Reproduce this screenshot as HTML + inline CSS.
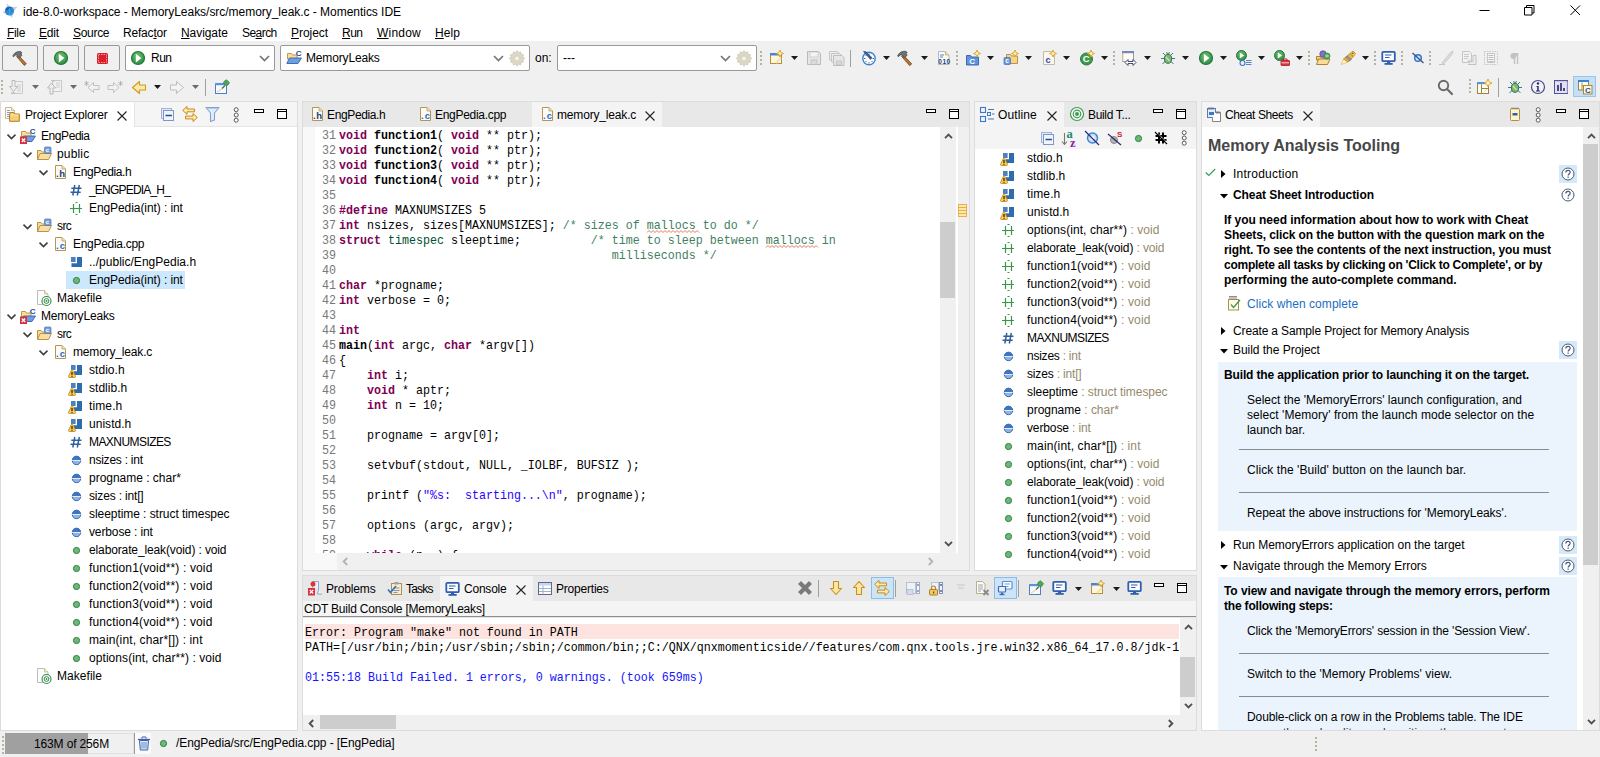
<!DOCTYPE html>
<html><head><meta charset="utf-8"><title>Momentics IDE</title>
<style>
*{box-sizing:border-box;margin:0;padding:0}
html,body{width:1600px;height:757px;overflow:hidden;background:#f0f0f0;font-family:"Liberation Sans",sans-serif;font-size:12px;color:#000}
.a{position:absolute}
.i{position:absolute;overflow:visible}
.t{position:absolute;white-space:pre;line-height:18px;height:18px}
.b{font-weight:bold}
.panel{position:absolute;background:#fff;border:1px solid #dcdcdc;overflow:hidden}
.tabbar{position:absolute;left:0;top:0;right:0;height:25px;background:#e8e8e8}
.tab{position:absolute;top:0;height:25px;background:#f4f4f4}
.mono{font-family:"Liberation Mono",monospace;font-size:11.67px;white-space:pre}
.ln{position:absolute;left:0;width:336px;text-align:right;color:#787878;height:15px;line-height:15px;transform:scaleY(1.07);transform-origin:0 11px}
.cl{position:absolute;left:339px;height:15px;line-height:15px;transform:scaleY(1.07);transform-origin:0 11px}
.k{color:#7f0055;font-weight:bold}
.c{color:#3f7f5f}
.s{color:#2a00ff}
.f{font-weight:bold}
.sq{}
.ty{color:#948a6c}
.sel{position:absolute;background:#cce8ff}
.sep{position:absolute;height:1px;background:#8a8a8a}
.btn{position:absolute;border:1px solid #999;background:#f0f0f0;border-radius:2px}
.combo{position:absolute;border:1px solid #999;background:#fff;border-radius:2px}
u{text-decoration:underline;text-underline-offset:1px}
</style></head><body>
<svg width="0" height="0" style="position:absolute"><defs><radialGradient id="gb" cx="45%" cy="35%" r="70%"><stop offset="0" stop-color="#6fbd6c"/><stop offset="1" stop-color="#2a8a42"/></radialGradient></defs></svg>
<div class="a" style="left:0;top:0;width:1600px;height:41px;background:#fff"></div>
<svg class="i" style="left:2px;top:3px" width="16" height="16" viewBox="0 0 16 16" ><path d="M5 .500l3.500 3.500 7-.200-4 4.700-1.500 6.500-3.500-4.500-6.200-.500 4.200-4z" fill="#c0c8de" opacity=".85"/><circle cx="7.500" cy="8" r="4.600" fill="#2b8ad6"/><path d="M3.500 6c1.500-2 4-2.500 6-1.500-1 1.500-3 1-4 2.500s-1.500 1-2-1z" fill="#1b5fae"/><path d="M8.500 12.500c1.500-.5 3-2 3.300-4-1.500.5-2 2-3.300 4z" fill="#4aa8ea"/><path d="M7.300 4.500v8" stroke="#8fd0f4" stroke-width=".6" opacity=".7"/></svg>
<div class="t " style="left:23px;top:3px;;letter-spacing:-0.032px">ide-8.0-workspace - MemoryLeaks/src/memory_leak.c - Momentics IDE</div>
<svg class="i" style="left:1479px;top:5px" width="12" height="12" viewBox="0 0 12 12"><path d="M0.5 5.5h10" stroke="#000" fill="none"/></svg>
<svg class="i" style="left:1524px;top:5px" width="12" height="12" viewBox="0 0 12 12"><path d="M0.5 2.5h7.500v7.500h-7.500zM2.500 2.500v-2h7.500v7.500h-2" stroke="#000" fill="none"/></svg>
<svg class="i" style="left:1570px;top:5px" width="12" height="12" viewBox="0 0 12 12"><path d="M0.500 0.500l9.500 9.500M10 0.500l-9.500 9.500" stroke="#000" fill="none"/></svg>
<div class="t " style="left:7px;top:24px;;letter-spacing:-0.334px"><u>F</u>ile</div>
<div class="t " style="left:39px;top:24px;;letter-spacing:-0.169px"><u>E</u>dit</div>
<div class="t " style="left:73px;top:24px;;letter-spacing:-0.304px"><u>S</u>ource</div>
<div class="t " style="left:123px;top:24px;;letter-spacing:-0.194px">Refac<u>t</u>or</div>
<div class="t " style="left:181px;top:24px;;letter-spacing:-0.070px"><u>N</u>avigate</div>
<div class="t " style="left:242px;top:24px;;letter-spacing:-0.554px">Se<u>a</u>rch</div>
<div class="t " style="left:291px;top:24px;;letter-spacing:-0.050px"><u>P</u>roject</div>
<div class="t " style="left:342px;top:24px;;letter-spacing:-0.505px"><u>R</u>un</div>
<div class="t " style="left:377px;top:24px;;letter-spacing:0.220px"><u>W</u>indow</div>
<div class="t " style="left:435px;top:24px;;letter-spacing:0.080px"><u>H</u>elp</div>
<div class="btn" style="left:2px;top:45px;width:36px;height:26px"></div>
<svg class="i" style="left:12px;top:50px" width="16" height="16" viewBox="0 0 16 16" ><g transform="translate(-.800 -.800) scale(1.080)"><path d="M6.5 5.5l7.5 8-1.8 1.5-7.2-8.200z" fill="#b5763a" stroke="#7a4a1d" stroke-width=".8"/><path d="M1.500 6.500c1-3 4-4.800 7.500-4.200l1 1.200-1.200.5 1.200 1.700-2.500 2.300-1.800-2.300c-1.200-.5-2.700-.2-3.400 1.300z" fill="#6e7278" stroke="#44484d" stroke-width=".7"/></g></svg>
<div class="btn" style="left:43px;top:45px;width:36px;height:26px"></div>
<svg class="i" style="left:53px;top:50px" width="16" height="16" viewBox="0 0 16 16" ><circle cx="8" cy="8" r="6.500" fill="url(#gb)" stroke="#1f7a3a" stroke-width="1.200"/><path d="M5.800 3.800v8.600l5.600-4.300z" fill="#fff"/></svg>
<div class="btn" style="left:84px;top:45px;width:36px;height:26px"></div>
<svg class="i" style="left:94px;top:50px" width="16" height="16" viewBox="0 0 16 16" ><rect x="3" y="3" width="11" height="11" rx="1.500" fill="#d9202c"/><rect x="4.500" y="4.500" width="8" height="8" fill="none" stroke="#f4a8a8" stroke-width=".9" stroke-dasharray="1.500 1"/></svg>
<div class="combo" style="left:125px;top:45px;width:150px;height:26px"></div>
<svg class="i" style="left:130px;top:50px" width="16" height="16" viewBox="0 0 16 16" ><circle cx="8" cy="8" r="6.500" fill="url(#gb)" stroke="#1f7a3a" stroke-width="1.200"/><path d="M5.800 3.800v8.600l5.600-4.300z" fill="#fff"/></svg>
<div class="t " style="left:151px;top:49px;;letter-spacing:-0.505px">Run</div>
<svg class="i" style="left:259px;top:55px" width="11" height="7" viewBox="0 0 11 7"><path d="M1 1l4.500 4.500 4.500-4.500" stroke="#767676" stroke-width="1.700" fill="none"/></svg>
<div class="combo" style="left:280px;top:45px;width:250px;height:26px"></div>
<svg class="i" style="left:286px;top:50px" width="16" height="16" viewBox="0 0 16 16" ><path d="M1.500 3.500h4l1 1.500h4.500v4h-9.500z" fill="#f8df98" stroke="#b98f3a" stroke-width=".9"/><path d="M.800 13.500l2.700-5.500h12l-3.500 5.500z" fill="#6c9fe4" stroke="#3862ae" stroke-width=".9"/><text x="9.800" y="6.300" font-family="Liberation Sans" font-weight="bold" font-size="8" fill="#1d4a9a">C</text></svg>
<div class="t " style="left:306px;top:49px;;letter-spacing:-0.160px">MemoryLeaks</div>
<svg class="i" style="left:493px;top:55px" width="11" height="7" viewBox="0 0 11 7"><path d="M1 1l4.500 4.500 4.500-4.500" stroke="#767676" stroke-width="1.700" fill="none"/></svg>
<svg class="i" style="left:509px;top:50px" width="16" height="16" viewBox="0 0 16 16" ><g fill="#dcd8c6" stroke="#c6c1aa" stroke-width=".6"><path d="M8 .500l1.300 2.200 2.400-.9.400 2.500 2.500.4-.9 2.400 2.200 1.300-2.200 1.300.9 2.400-2.500.4-.4 2.500-2.400-.9-1.300 2.200-1.300-2.200-2.400.9-.4-2.500-2.500-.4.900-2.400-2.200-1.300 2.200-1.300-.9-2.400 2.500-.4.400-2.500 2.400.9z"/></g><circle cx="8" cy="8.400" r="2.500" fill="#f4f3ee" stroke="#c6c1aa" stroke-width=".6"/></svg>
<div class="t " style="left:535px;top:49px;">on:</div>
<div class="combo" style="left:557px;top:45px;width:200px;height:26px"></div>
<div class="t " style="left:563px;top:49px;">---</div>
<svg class="i" style="left:720px;top:55px" width="11" height="7" viewBox="0 0 11 7"><path d="M1 1l4.500 4.500 4.500-4.500" stroke="#767676" stroke-width="1.700" fill="none"/></svg>
<svg class="i" style="left:736px;top:50px" width="16" height="16" viewBox="0 0 16 16" ><g fill="#dcd8c6" stroke="#c6c1aa" stroke-width=".6"><path d="M8 .500l1.300 2.200 2.400-.9.400 2.500 2.500.4-.9 2.400 2.200 1.300-2.200 1.300.9 2.400-2.500.4-.4 2.500-2.400-.9-1.300 2.200-1.300-2.200-2.400.9-.4-2.500-2.500-.4.900-2.400-2.200-1.300 2.200-1.300-.9-2.400 2.500-.4.400-2.500 2.400.9z"/></g><circle cx="8" cy="8.400" r="2.500" fill="#f4f3ee" stroke="#c6c1aa" stroke-width=".6"/></svg>
<div class="a" style="left:760px;top:51px;width:2px;height:14px;background:repeating-linear-gradient(#b9b2a3 0 2px,transparent 2px 4px)"></div>
<svg class="i" style="left:768px;top:50px" width="16" height="16" viewBox="0 0 16 16" ><rect x="2.500" y="3.500" width="11" height="10" fill="#fdf6dc" stroke="#b4903c" stroke-width="1"/><rect x="2" y="3" width="12" height="2.500" fill="#4a86d0"/><path d="M8 13l5-5" stroke="#f4e2a8" stroke-width="2"/><path d="M12 0l1 2.500 2.500 1-2.500 1-1 2.500-1-2.500-2.500-1 2.500-1z" fill="#fff3c0" stroke="#d9a21c" stroke-width=".9"/></svg>
<svg class="i" style="left:791px;top:56px" width="7" height="4" viewBox="0 0 7 4"><path d="M0 0h7l-3.500 4z" fill="#1a1a1a"/></svg>
<svg class="i" style="left:806px;top:50px" width="16" height="16" viewBox="0 0 16 16" ><path d="M1.500 1.500h11l2 2v11h-13z" fill="#e6e6e6" stroke="#b9b9b9"/><rect x="4" y="2" width="8" height="5" fill="#f4f4f4" stroke="#c2c2c2" stroke-width=".7"/><rect x="5" y="10" width="6" height="4.500" fill="#dadada" stroke="#b9b9b9" stroke-width=".7"/></svg>
<svg class="i" style="left:829px;top:50px" width="16" height="16" viewBox="0 0 16 16" ><path d="M.500 1.500h8l1.500 1.500v7h-9.500z" fill="#ececec" stroke="#bdbdbd" stroke-width=".8"/><path d="M2.500 3.500h8l1.500 1.500v7h-9.500z" fill="#ececec" stroke="#bdbdbd" stroke-width=".8"/><path d="M4.500 5.500h8.500l2 2v8h-10.500z" fill="#e6e6e6" stroke="#b9b9b9" stroke-width=".9"/><rect x="7.500" y="11" width="5" height="4" fill="#d8d8d8" stroke="#b9b9b9" stroke-width=".6"/></svg>
<div class="a" style="left:850px;top:50px;width:1px;height:17px;background:#a0a0a0"></div>
<svg class="i" style="left:861px;top:50px" width="16" height="16" viewBox="0 0 16 16" ><circle cx="8" cy="8.500" r="6.200" fill="#fff" stroke="#3f82cf" stroke-width="1.400"/><g stroke="#3a6cb0" stroke-width="1"><path d="M8 3.500v1.500M8 12v1.500M3 8.500h1.500M11.500 8.500h1.500M4.500 5l1 1M11.500 12l-1-1M4.500 12l1-1"/></g><path d="M2.500 1.500l7 8 1.500-1.800-6.500-6.200z" fill="#3c5a8e" stroke="#24406f" stroke-width=".6"/></svg>
<svg class="i" style="left:883px;top:56px" width="7" height="4" viewBox="0 0 7 4"><path d="M0 0h7l-3.500 4z" fill="#1a1a1a"/></svg>
<svg class="i" style="left:897px;top:50px" width="16" height="16" viewBox="0 0 16 16" ><g transform="translate(-1 -1.200) scale(1.120)"><path d="M6.5 5.5l7.5 8-1.8 1.5-7.2-8.200z" fill="#b5763a" stroke="#7a4a1d" stroke-width=".8"/><path d="M1.500 6.500c1-3 4-4.800 7.500-4.200l1 1.200-1.200.5 1.200 1.700-2.500 2.300-1.800-2.300c-1.200-.5-2.700-.2-3.400 1.300z" fill="#6e7278" stroke="#44484d" stroke-width=".7"/></g></svg>
<svg class="i" style="left:921px;top:56px" width="7" height="4" viewBox="0 0 7 4"><path d="M0 0h7l-3.500 4z" fill="#1a1a1a"/></svg>
<svg class="i" style="left:936px;top:50px" width="16" height="16" viewBox="0 0 16 16" ><path d="M2.500 1.500h7l3.500 3.500v9.500h-10.500z" fill="#fbfaf3" stroke="#a8b2c4" stroke-width=".9"/><path d="M9.500 1.500v3.500h3.500" fill="#f1e4b8" stroke="#c0a960" stroke-width=".8"/><path d="M4 5h4M4 7h3" stroke="#5b84c8" stroke-width="1"/><text x="2.200" y="14" font-family="Liberation Sans" font-weight="bold" font-size="6.500" fill="#1f3f80" textLength="12">010</text></svg>
<div class="a" style="left:956px;top:51px;width:2px;height:14px;background:repeating-linear-gradient(#b9b2a3 0 2px,transparent 2px 4px)"></div>
<svg class="i" style="left:965px;top:50px" width="16" height="16" viewBox="0 0 16 16" ><path d="M1.500 5.500h4l1 1.500h7v8h-12z" fill="#5f93df" stroke="#335fae" stroke-width=".9"/><text x="4.300" y="13.800" font-family="Liberation Sans" font-weight="bold" font-size="8" fill="#fff">C</text><path d="M12 0l1 2.500 2.500 1-2.500 1-1 2.500-1-2.500-2.500-1 2.500-1z" fill="#fff3c0" stroke="#d9a21c" stroke-width=".9"/></svg>
<svg class="i" style="left:987px;top:56px" width="7" height="4" viewBox="0 0 7 4"><path d="M0 0h7l-3.500 4z" fill="#1a1a1a"/></svg>
<svg class="i" style="left:1003px;top:50px" width="16" height="16" viewBox="0 0 16 16" ><path d="M3.500 4.500h4l1 1.500h6v7.500h-11z" fill="#f4d58c" stroke="#b4883a" stroke-width=".9"/><rect x="1" y="7.500" width="6.500" height="7" rx="1" fill="#6a97dc" stroke="#3f6ab4" stroke-width=".7"/><text x="2.200" y="13.300" font-family="Liberation Sans" font-weight="bold" font-size="6.500" fill="#fff">c</text><path d="M12 0l1 2.500 2.500 1-2.500 1-1 2.500-1-2.500-2.500-1 2.500-1z" fill="#fff3c0" stroke="#d9a21c" stroke-width=".9"/></svg>
<svg class="i" style="left:1025px;top:56px" width="7" height="4" viewBox="0 0 7 4"><path d="M0 0h7l-3.500 4z" fill="#1a1a1a"/></svg>
<svg class="i" style="left:1041px;top:50px" width="16" height="16" viewBox="0 0 16 16" ><path d="M2.500 1.500h8l3 3v10h-11z" fill="#fbf7ec" stroke="#b9b4a6" stroke-width=".9"/><text x="4.500" y="12.500" font-family="Liberation Sans" font-weight="bold" font-size="9" fill="#2a43b8">c</text><path d="M12 0l1 2.500 2.500 1-2.500 1-1 2.500-1-2.500-2.500-1 2.500-1z" fill="#fff3c0" stroke="#d9a21c" stroke-width=".9"/></svg>
<svg class="i" style="left:1063px;top:56px" width="7" height="4" viewBox="0 0 7 4"><path d="M0 0h7l-3.500 4z" fill="#1a1a1a"/></svg>
<svg class="i" style="left:1079px;top:50px" width="16" height="16" viewBox="0 0 16 16" ><circle cx="7.500" cy="9" r="6" fill="#3f9a50" stroke="#2c7a3a"/><text x="3.800" y="12.300" font-family="Liberation Sans" font-weight="bold" font-size="9.500" fill="#fff">C</text><path d="M12 0l1 2.500 2.500 1-2.500 1-1 2.500-1-2.500-2.500-1 2.500-1z" fill="#fff3c0" stroke="#d9a21c" stroke-width=".9"/></svg>
<svg class="i" style="left:1101px;top:56px" width="7" height="4" viewBox="0 0 7 4"><path d="M0 0h7l-3.500 4z" fill="#1a1a1a"/></svg>
<div class="a" style="left:1113px;top:51px;width:2px;height:14px;background:repeating-linear-gradient(#b9b2a3 0 2px,transparent 2px 4px)"></div>
<svg class="i" style="left:1121px;top:50px" width="16" height="16" viewBox="0 0 16 16" ><rect x="1.500" y="1.500" width="11" height="10" fill="#fdfcf6" stroke="#8a8fa8" stroke-width=".9"/><rect x="1" y="1" width="12" height="2.200" fill="#7a86b8"/><path d="M2 3.500v8" stroke="#e9d9a0" stroke-width="1.200"/><path d="M4 12.500l3-3v2h5v-2l3 3-3 3v-2h-5v2z" fill="#fff" stroke="#333a66" stroke-width=".9"/></svg>
<svg class="i" style="left:1144px;top:56px" width="7" height="4" viewBox="0 0 7 4"><path d="M0 0h7l-3.500 4z" fill="#1a1a1a"/></svg>
<svg class="i" style="left:1160px;top:50px" width="16" height="16" viewBox="0 0 16 16" ><g stroke="#2f7f86" stroke-width="1" fill="none"><path d="M3 3l2.500 2.500M13 3l-2.500 2.500M1 8.500h3.500M15 8.500h-3.500M2.500 14l3-3M13.500 14l-3-3M6.500 2l1 2M9.500 2l-1 2"/></g><ellipse cx="8" cy="8.800" rx="3.600" ry="4.500" fill="#7fb86a" stroke="#2f6f5a" stroke-width="1"/><path d="M6 7l3.500 4" stroke="#c9e6b8" stroke-width="1.200"/></svg>
<svg class="i" style="left:1182px;top:56px" width="7" height="4" viewBox="0 0 7 4"><path d="M0 0h7l-3.500 4z" fill="#1a1a1a"/></svg>
<svg class="i" style="left:1198px;top:50px" width="16" height="16" viewBox="0 0 16 16" ><circle cx="8" cy="8" r="6.500" fill="url(#gb)" stroke="#1f7a3a" stroke-width="1.200"/><path d="M5.800 3.800v8.600l5.600-4.300z" fill="#fff"/></svg>
<svg class="i" style="left:1220px;top:56px" width="7" height="4" viewBox="0 0 7 4"><path d="M0 0h7l-3.500 4z" fill="#1a1a1a"/></svg>
<svg class="i" style="left:1236px;top:50px" width="16" height="16" viewBox="0 0 16 16" ><circle cx="5.500" cy="5.500" r="5" fill="url(#gb)" stroke="#1f7a3a" stroke-width="1"/><path d="M3.800 2.500v6l4.300-3z" fill="#fff"/><circle cx="6.500" cy="13" r="2.500" fill="#e9f1fb" stroke="#3f74c4" stroke-width="1.100"/><path d="M10 10.500h5.500M10 12.500h5.500M10 14.500h5.500" stroke="#4a76bd" stroke-width=".9"/></svg>
<svg class="i" style="left:1258px;top:56px" width="7" height="4" viewBox="0 0 7 4"><path d="M0 0h7l-3.500 4z" fill="#1a1a1a"/></svg>
<svg class="i" style="left:1274px;top:50px" width="16" height="16" viewBox="0 0 16 16" ><circle cx="5.500" cy="5.500" r="5" fill="url(#gb)" stroke="#1f7a3a" stroke-width="1"/><path d="M3.800 2.500v6l4.300-3z" fill="#fff"/><rect x="7" y="10.500" width="8.500" height="5" rx=".5" fill="#e0323c" stroke="#a81a24" stroke-width=".8"/><path d="M9.500 10.500v-1.500h3.500v1.500" fill="none" stroke="#a81a24" stroke-width="1"/><path d="M7.500 12.800h7.500" stroke="#fff" stroke-width=".8"/></svg>
<svg class="i" style="left:1296px;top:56px" width="7" height="4" viewBox="0 0 7 4"><path d="M0 0h7l-3.500 4z" fill="#1a1a1a"/></svg>
<div class="a" style="left:1308px;top:51px;width:2px;height:14px;background:repeating-linear-gradient(#b9b2a3 0 2px,transparent 2px 4px)"></div>
<svg class="i" style="left:1315px;top:50px" width="16" height="16" viewBox="0 0 16 16" ><path d="M1.500 6.500h4l1 1.500h6.500v2h-11.500z" fill="#f3cf80" stroke="#a87426" stroke-width=".9"/><path d="M1.500 14.500l2-5.500h11.500l-2.500 5.500z" fill="#f7dc9a" stroke="#a87426" stroke-width=".9"/><circle cx="8" cy="4" r="3.200" fill="#8a6fc6" stroke="#5a479a" stroke-width=".8"/><circle cx="12" cy="6" r="3" fill="#5fb56a" stroke="#2f7f3f" stroke-width=".8"/><path d="M10.500 6h3" stroke="#d9f0dc" stroke-width="1"/></svg>
<svg class="i" style="left:1340px;top:50px" width="16" height="16" viewBox="0 0 16 16" ><path d="M1 14.500l2.500-5.500 4.500 3z" fill="#fff6d8" stroke="#e4c060" stroke-width=".8"/><path d="M3.500 9l6.500-5.500 3.500 3-5.500 5.500z" fill="#f0b548" stroke="#b98322" stroke-width=".8"/><path d="M5.500 7.300l4.200 3.700 1.600-1.600-4-3.600z" fill="#9a9a9a" stroke="#6c6c6c" stroke-width=".6"/><path d="M10 3.500l3-2.500 2.500 2.500-2 3z" fill="#f3c868" stroke="#b98322" stroke-width=".8"/><circle cx="12.800" cy="3.300" r=".8" fill="#6a4a10"/></svg>
<svg class="i" style="left:1362px;top:56px" width="7" height="4" viewBox="0 0 7 4"><path d="M0 0h7l-3.500 4z" fill="#1a1a1a"/></svg>
<div class="a" style="left:1374px;top:51px;width:2px;height:14px;background:repeating-linear-gradient(#b9b2a3 0 2px,transparent 2px 4px)"></div>
<svg class="i" style="left:1381px;top:50px" width="16" height="16" viewBox="0 0 16 16" ><rect x="1.300" y="1.800" width="12.500" height="9.400" rx="1" fill="#fff" stroke="#2f5fb0" stroke-width="1.800"/><path d="M4 5h6.500M4 7.500h4.500" stroke="#2f5fb0" stroke-width="1.100"/><path d="M6 11.500h3.200v2h-3.200z" fill="#2f5fb0"/><rect x="3.500" y="13" width="8.200" height="1.800" fill="#2f5fb0"/></svg>
<div class="a" style="left:1401px;top:51px;width:2px;height:14px;background:repeating-linear-gradient(#b9b2a3 0 2px,transparent 2px 4px)"></div>
<svg class="i" style="left:1410px;top:50px" width="16" height="16" viewBox="0 0 16 16" ><circle cx="8" cy="8" r="3.300" fill="#d4e4f6" stroke="#2e7bc8" stroke-width="1.500"/><path d="M2.500 3l11 10" stroke="#44508a" stroke-width="1.300"/></svg>
<div class="a" style="left:1429px;top:51px;width:2px;height:14px;background:repeating-linear-gradient(#b9b2a3 0 2px,transparent 2px 4px)"></div>
<svg class="i" style="left:1438px;top:50px" width="16" height="16" viewBox="0 0 16 16" ><path d="M1 14.500h6" stroke="#c4c4c4"/><path d="M4 13l8.500-10.500 2.500-1.500-1 3.500-8 9z" fill="#dcdcdc" stroke="#c2c2c2" stroke-width=".8"/></svg>
<svg class="i" style="left:1461px;top:50px" width="16" height="16" viewBox="0 0 16 16" ><path d="M1.500 1.500h7l2 2v9h-9z" fill="#f2f2f2" stroke="#c0c0c0" stroke-width=".9"/><path d="M3 4.500h5M3 6.500h5M3 8.500h4" stroke="#c8c8c8"/><path d="M7 11.500h5v-6h3v9h-8" fill="#ececec" stroke="#bcbcbc" stroke-width=".9"/><path d="M7 11.500l2-2M7 11.500l2 2" stroke="#bcbcbc"/></svg>
<svg class="i" style="left:1483px;top:50px" width="16" height="16" viewBox="0 0 16 16" ><rect x="1.500" y="1.500" width="13" height="13" fill="#f0f0f0" stroke="#c2c2c2" stroke-width=".9" stroke-dasharray="1.500 1"/><rect x="4.500" y="3.500" width="7" height="9" fill="#f6f6f6" stroke="#bcbcbc" stroke-width=".8"/><path d="M5.500 5.500h5M5.500 7.500h5M5.500 9.500h5M5.500 11.500h5" stroke="#b6b6b6" stroke-width=".9"/></svg>
<svg class="i" style="left:1507px;top:50px" width="16" height="16" viewBox="0 0 16 16" ><path d="M10.500 3v11M7.500 3v11" stroke="#c2c2c2" stroke-width="1.400"/><path d="M11.500 3h-5a3 3 0 0 0 0 6h1z" fill="#c2c2c2"/></svg>
<div class="a" style="left:1px;top:80px;width:2px;height:14px;background:repeating-linear-gradient(#b9b2a3 0 2px,transparent 2px 4px)"></div>
<svg class="i" style="left:9px;top:79px" width="16" height="16" viewBox="0 0 16 16" ><path d="M4.500 2.500h9v12h-9z" fill="#f1f1f1" stroke="#c4c4c4" stroke-width=".9"/><path d="M8 6h4M8 8h4M8 10h4M8 12h4" stroke="#cfcfcf"/><path d="M3 1.500h3v6h2.500l-4 5-4-5h2.500z" fill="#ededed" stroke="#b4b4b4" stroke-width=".9"/><rect x="2" y="13.500" width="4" height="1.500" fill="#bdbdbd"/></svg>
<svg class="i" style="left:32px;top:85px" width="7" height="4" viewBox="0 0 7 4"><path d="M0 0h7l-3.500 4z" fill="#6a6a6a"/></svg>
<svg class="i" style="left:47px;top:79px" width="16" height="16" viewBox="0 0 16 16" ><path d="M5.500 1.500h9v11h-9z" fill="#f1f1f1" stroke="#c4c4c4" stroke-width=".9"/><path d="M9 4h4M9 6h4M9 8h4" stroke="#cfcfcf"/><rect x="4.500" y="1" width="3" height="1.500" fill="#bdbdbd"/><path d="M3 15h3v-6h2.500l-4-5-4 5h2.500z" fill="#ededed" stroke="#b4b4b4" stroke-width=".9"/></svg>
<svg class="i" style="left:70px;top:85px" width="7" height="4" viewBox="0 0 7 4"><path d="M0 0h7l-3.500 4z" fill="#6a6a6a"/></svg>
<svg class="i" style="left:84px;top:79px" width="16" height="16" viewBox="0 0 16 16" ><path d="M15 6.500h-5.500v-3l-5.500 5 5.500 5v-3h5.500z" fill="#f1f1f1" stroke="#bcbcbc" stroke-width=".9"/><path d="M2.500 2v5M.3 3.200l4.400 2.600M.3 5.800l4.400-2.600" stroke="#a8a8a8" stroke-width=".8"/></svg>
<svg class="i" style="left:107px;top:79px" width="16" height="16" viewBox="0 0 16 16" ><path d="M1 6.500h5.500v-3l5.500 5-5.500 5v-3h-5.500z" fill="#f1f1f1" stroke="#bcbcbc" stroke-width=".9"/><path d="M13.500 2v5M11.300 3.200l4.400 2.600M11.300 5.800l4.400-2.600" stroke="#a8a8a8" stroke-width=".8"/></svg>
<svg class="i" style="left:131px;top:79px" width="16" height="16" viewBox="0 0 16 16" ><path d="M14.500 6h-6v-3.500l-7 6 7 6v-3.500h6z" fill="#fde9a8" stroke="#cf9a26" stroke-width="1.100" stroke-linejoin="round"/></svg>
<svg class="i" style="left:154px;top:85px" width="7" height="4" viewBox="0 0 7 4"><path d="M0 0h7l-3.500 4z" fill="#1a1a1a"/></svg>
<svg class="i" style="left:169px;top:79px" width="16" height="16" viewBox="0 0 16 16" ><path d="M1.500 6h6v-3.500l7 6-7 6v-3.500h-6z" fill="#f4f4f4" stroke="#bcbcbc" stroke-width="1" stroke-linejoin="round"/></svg>
<svg class="i" style="left:192px;top:85px" width="7" height="4" viewBox="0 0 7 4"><path d="M0 0h7l-3.500 4z" fill="#6a6a6a"/></svg>
<div class="a" style="left:205px;top:79px;width:1px;height:17px;background:#a0a0a0"></div>
<svg class="i" style="left:214px;top:79px" width="16" height="16" viewBox="0 0 16 16" ><rect x="1.500" y="4.500" width="11" height="10" fill="#f7fbff" stroke="#4a7fc0" stroke-width="1"/><rect x="1" y="4" width="12" height="2.200" fill="#5a94d6"/><path d="M3 13l5-3" stroke="#e4d7a0" stroke-width="1.200"/><path d="M8 9.500l3-3" stroke="#4a6a50" stroke-width="1.200"/><path d="M10 2.500l2.500-1.800 3 3-1.800 2.500-1.700.5-2.500-2.500z" fill="#4ea85a" stroke="#2c7a3a" stroke-width=".7"/></svg>
<svg class="i" style="left:1437px;top:79px" width="16" height="16" viewBox="0 0 16 16" ><circle cx="6.500" cy="6.500" r="4.700" fill="none" stroke="#6a6a6a" stroke-width="1.900"/><path d="M10 10l5 5" stroke="#6a6a6a" stroke-width="2.200" stroke-linecap="round"/></svg>
<div class="a" style="left:1469px;top:79px;width:2px;height:16px;background:repeating-linear-gradient(#b9b2a3 0 2px,transparent 2px 4px)"></div>
<svg class="i" style="left:1476px;top:79px" width="16" height="16" viewBox="0 0 16 16" ><rect x="1.500" y="3.500" width="11" height="11" fill="#fffdf2" stroke="#9a8440" stroke-width="1"/><rect x="1" y="3" width="12" height="2.200" fill="#5a94d6"/><path d="M5.500 5.500v9M5.500 9.500h7" stroke="#9a8440" stroke-width="1"/><path d="M8 13l3-3" stroke="#ead9a0" stroke-width="1"/><path d="M12 0l1.200 2.800 2.800 1.200-2.800 1.200-1.200 2.800-1.200-2.800-2.800-1.200 2.800-1.200z" fill="#fff6d0" stroke="#d9a21c" stroke-width=".9"/></svg>
<div class="a" style="left:1498px;top:78px;width:1px;height:19px;background:#a0a0a0"></div>
<svg class="i" style="left:1507px;top:79px" width="16" height="16" viewBox="0 0 16 16" ><g stroke="#2f7f86" stroke-width="1" fill="none"><path d="M3 3l2.500 2.500M13 3l-2.500 2.500M1 8.500h3.500M15 8.500h-3.500M2.500 14l3-3M13.500 14l-3-3M6.500 2l1 2M9.500 2l-1 2"/></g><ellipse cx="8" cy="8.800" rx="3.600" ry="4.500" fill="#7fb86a" stroke="#2f6f5a" stroke-width="1"/><path d="M6 7l3.500 4" stroke="#c9e6b8" stroke-width="1.200"/></svg>
<svg class="i" style="left:1530px;top:79px" width="16" height="16" viewBox="0 0 16 16" ><circle cx="8" cy="8" r="6.500" fill="#f2f0fa" stroke="#4a4a8e" stroke-width="1.200"/><path d="M6.500 7h2.200v4.500h1.300v1h-4v-1h1.200v-3.500h-.7z" fill="#2a2a5e"/><circle cx="8" cy="4.500" r="1.200" fill="#2a2a5e"/></svg>
<svg class="i" style="left:1553px;top:79px" width="16" height="16" viewBox="0 0 16 16" ><rect x="1.500" y="1.500" width="13" height="13" fill="#e4e2f2" stroke="#55559a" stroke-width="1"/><path d="M2.500 2.500h11.500v11.500" fill="none" stroke="#c7c4e2" stroke-width="1"/><path d="M5 6v6M8 4v8M11 9v3" stroke="#2f2f7a" stroke-width="1.700"/></svg>
<div class="a" style="left:1573px;top:76px;width:23px;height:21px;background:#c7dff5;border:1px solid #93c8f5"></div>
<svg class="i" style="left:1577px;top:79px" width="16" height="16" viewBox="0 0 16 16" ><rect x="1.500" y="1.500" width="10" height="9.500" fill="#fffdf2" stroke="#9a8440" stroke-width="1"/><rect x="1" y="1" width="11" height="2" fill="#3f7fd0"/><path d="M5 3.500v7.500M5 7h6.500" stroke="#9a8440" stroke-width=".9"/><rect x="6.500" y="6.500" width="8.500" height="8.500" fill="#fdf6dc" stroke="#a88a3a" stroke-width="1"/><text x="8" y="14" font-family="Liberation Sans" font-weight="bold" font-size="8" fill="#1f4f9e">C</text></svg>
<div class="panel" style="left:0;top:101px;width:298px;height:630px"><div class="tabbar" style="background:#f5f5f5;border-bottom:1px solid #e4e4e4"></div><div class="tab" style="left:0;width:134px;background:#fff;border-right:1px solid #e4e4e4"></div></div>
<svg class="i" style="left:5px;top:106px" width="16" height="16" viewBox="0 0 16 16" ><path d="M.500 1.500h6l3 3v8h-9z" fill="#fcfcfa" stroke="#c4b084" stroke-width=".9"/><path d="M6.500 1.500v3h3" fill="#efe0b4" stroke="#c4b084" stroke-width=".7"/><path d="M2 4.500h3M2 6.500h4M2 8.500h3M2 10.500h3" stroke="#6a9ad8" stroke-width=".9"/><path d="M4.600 15.300v-7.300l1-1.500h3l1 1.500h4.700v7.300z" fill="#f6d078" stroke="#b87a1a" stroke-width="1" stroke-linejoin="round"/><path d="M5.500 9h8" stroke="#fbe6a8" stroke-width="1"/></svg>
<div class="t " style="left:25px;top:106px;;letter-spacing:-0.179px">Project Explorer</div>
<svg class="i" style="left:117px;top:111px" width="10" height="10" viewBox="0 0 10 10"><path d="M0.5 0.5l9 9M9.5 0.5l-9 9" stroke="#222" stroke-width="1.1" fill="none"/></svg>
<svg class="i" style="left:160px;top:106px" width="16" height="16" viewBox="0 0 16 16" ><rect x="1.500" y="2.500" width="10" height="10" fill="#dcebf9" stroke="#a4b2d6" stroke-width="1"/><rect x="3.500" y="4.500" width="10" height="10" fill="#eef6fd" stroke="#8494c4" stroke-width="1"/><path d="M5.500 9.500h6.500" stroke="#1f4f9a" stroke-width="1.500"/></svg>
<svg class="i" style="left:182px;top:106px" width="16" height="16" viewBox="0 0 16 16" ><path d="M.700 4.400l4.300-4v2.600h7.500v2.800h-7.500v2.600z" fill="#fdeab0" stroke="#c88a1a" stroke-width="1" stroke-linejoin="round"/><path d="M15.300 11.500l-4.300-4v2.600h-7.500v2.800h7.500v2.600z" fill="#fdeab0" stroke="#c88a1a" stroke-width="1" stroke-linejoin="round"/></svg>
<svg class="i" style="left:205px;top:106px" width="16" height="16" viewBox="0 0 16 16" ><path d="M1 1.500h13l-4.500 5.500v7l-4 1.500v-8.500z" fill="#dbeefb" stroke="#8aa0cc" stroke-width="1.100" stroke-linejoin="round"/><path d="M2 2.500h11" stroke="#b4cbe8" stroke-width="1"/></svg>
<svg class="i" style="left:233px;top:107px" width="6" height="16" viewBox="0 0 6 16"><g fill="#fff" stroke="#5a5a5a" stroke-width="1"><circle cx="3.200" cy="2.700" r="2"/><circle cx="3.200" cy="8" r="2"/><circle cx="3.200" cy="13.200" r="2"/></g></svg>
<svg class="i" style="left:254px;top:109px" width="12" height="12" viewBox="0 0 12 12"><rect x="0.5" y="0.5" width="9" height="3" fill="#fff" stroke="#000"/></svg><svg class="i" style="left:277px;top:109px" width="12" height="12" viewBox="0 0 12 12"><rect x="0.5" y="0.5" width="9" height="9" fill="#fff" stroke="#000"/><path d="M0.5 2.5h9" stroke="#000"/></svg>
<svg class="i" style="left:7px;top:134px" width="9" height="6" viewBox="0 0 9 6"><path d="M0.500 0.600l4 4 4-4" stroke="#3c3c3c" stroke-width="1.500" fill="none"/></svg>
<svg class="i" style="left:20px;top:128px" width="16" height="16" viewBox="0 0 16 16" ><path d="M1.500 3.500h4l1 1.500h4.500v4h-9.500z" fill="#f8df98" stroke="#b98f3a" stroke-width=".9"/><path d="M.800 13.500l2.700-5.500h12l-3.500 5.500z" fill="#6c9fe4" stroke="#3862ae" stroke-width=".9"/><text x="9.800" y="6.300" font-family="Liberation Sans" font-weight="bold" font-size="8" fill="#1d4a9a">C</text><rect x="0" y="8.500" width="7" height="7.500" fill="#d9303c"/><path d="M1.800 10.500l3.400 3.500M5.200 10.500l-3.400 3.500" stroke="#fff" stroke-width="1.300"/></svg>
<div class="t " style="left:41px;top:127px;;letter-spacing:-0.430px">EngPedia</div>
<svg class="i" style="left:23px;top:152px" width="9" height="6" viewBox="0 0 9 6"><path d="M0.500 0.600l4 4 4-4" stroke="#3c3c3c" stroke-width="1.500" fill="none"/></svg>
<svg class="i" style="left:36px;top:146px" width="16" height="16" viewBox="0 0 16 16" ><path d="M1.500 13.500v-9h3.500l1.500 1.500h3" fill="#f6dc98" stroke="#b4883a" stroke-width=".9"/><path d="M1.500 13.500l2.500-6h11.500l-3 6z" fill="#f7dfa0" stroke="#b4883a" stroke-width=".9"/><rect x="8.500" y="1" width="6.500" height="6.500" rx="1" fill="#7aa0dc" stroke="#4a72b8" stroke-width=".7"/><text x="9.800" y="6.300" font-family="Liberation Sans" font-weight="bold" font-size="6" fill="#fff">c</text></svg>
<div class="t " style="left:57px;top:145px;;letter-spacing:0.158px">public</div>
<svg class="i" style="left:39px;top:170px" width="9" height="6" viewBox="0 0 9 6"><path d="M0.500 0.600l4 4 4-4" stroke="#3c3c3c" stroke-width="1.500" fill="none"/></svg>
<svg class="i" style="left:52px;top:164px" width="16" height="16" viewBox="0 0 16 16" ><path d="M3.500 1.500h6.500l3.500 3.500v9.500h-10z" fill="#fbfbf7" stroke="#b59650" stroke-width="1"/><path d="M10 1.500v3.500h3.500" fill="#f0dfae" stroke="#b59650" stroke-width=".7"/><text x="4" y="12.800" font-family="Liberation Sans" font-weight="bold" font-size="9.500" fill="#1f3a78" textLength="9">.h</text></svg>
<div class="t " style="left:73px;top:163px;;letter-spacing:-0.365px">EngPedia.h</div>
<svg class="i" style="left:68px;top:182px" width="16" height="16" viewBox="0 0 16 16" ><path d="M6.800 3l-2 10.500M11.300 3l-2 10.500M3.300 6.300h10.200M2.500 10.200h10.200" stroke="#2f5f9e" stroke-width="1.500" fill="none"/></svg>
<div class="t " style="left:89px;top:181px;;letter-spacing:-0.800px">_ENGPEDIA_H_</div>
<svg class="i" style="left:68px;top:200px" width="16" height="16" viewBox="0 0 16 16" ><path d="M2 8.500h12M5.500 4v9M11.500 4v9" stroke="#3a9648" stroke-width="1.200" fill="none"/><path d="M7.500 2.500h2M7.500 14.500h2" stroke="#3a9648" stroke-width="1"/></svg>
<div class="t " style="left:89px;top:199px;;letter-spacing:-0.083px">EngPedia(int) : int</div>
<svg class="i" style="left:23px;top:224px" width="9" height="6" viewBox="0 0 9 6"><path d="M0.500 0.600l4 4 4-4" stroke="#3c3c3c" stroke-width="1.500" fill="none"/></svg>
<svg class="i" style="left:36px;top:218px" width="16" height="16" viewBox="0 0 16 16" ><path d="M1.500 13.500v-9h3.500l1.500 1.500h3" fill="#f6dc98" stroke="#b4883a" stroke-width=".9"/><path d="M1.500 13.500l2.500-6h11.500l-3 6z" fill="#f7dfa0" stroke="#b4883a" stroke-width=".9"/><rect x="8.500" y="1" width="6.500" height="6.500" rx="1" fill="#7aa0dc" stroke="#4a72b8" stroke-width=".7"/><text x="9.800" y="6.300" font-family="Liberation Sans" font-weight="bold" font-size="6" fill="#fff">c</text></svg>
<div class="t " style="left:57px;top:217px;;letter-spacing:-0.599px">src</div>
<svg class="i" style="left:39px;top:242px" width="9" height="6" viewBox="0 0 9 6"><path d="M0.500 0.600l4 4 4-4" stroke="#3c3c3c" stroke-width="1.500" fill="none"/></svg>
<svg class="i" style="left:52px;top:236px" width="16" height="16" viewBox="0 0 16 16" ><path d="M3.500 1.500h6.500l3.500 3.500v9.500h-10z" fill="#fbfbf7" stroke="#b59650" stroke-width="1"/><path d="M10 1.500v3.500h3.500" fill="#f0dfae" stroke="#b59650" stroke-width=".7"/><text x="4" y="12.800" font-family="Liberation Sans" font-weight="bold" font-size="9.500" fill="#2f66bc" textLength="9">.c</text></svg>
<div class="t " style="left:73px;top:235px;;letter-spacing:-0.294px">EngPedia.cpp</div>
<svg class="i" style="left:68px;top:254px" width="16" height="16" viewBox="0 0 16 16" ><rect x="3" y="3" width="4.600" height="5" fill="#4f80bc"/><path d="M9 3h5v10h-10.500v-3.700h5.500z" fill="#2f6cab"/></svg>
<div class="t " style="left:89px;top:253px;;letter-spacing:0.018px">../public/EngPedia.h</div>
<div class="sel" style="left:66px;top:271px;width:119px;height:18px"></div>
<svg class="i" style="left:68px;top:272px" width="16" height="16" viewBox="0 0 16 16" ><circle cx="8.500" cy="8.500" r="3.100" fill="#6db878" stroke="#2f7f3f" stroke-width="1"/></svg>
<div class="t " style="left:89px;top:271px;;letter-spacing:-0.083px">EngPedia(int) : int</div>
<svg class="i" style="left:36px;top:290px" width="16" height="16" viewBox="0 0 16 16" ><path d="M1.500 .500h7l3.500 3.500v10.500h-10.500z" fill="#fcfcfc" stroke="#b4b4b4" stroke-width=".9"/><path d="M8.500 .500v3.500h3.500" fill="#f3e7c0" stroke="#c2b27a" stroke-width=".7"/><circle cx="10.500" cy="11" r="4.500" fill="#fff" stroke="#2f8a46" stroke-width="1.100"/><circle cx="10.500" cy="11" r="2.400" fill="none" stroke="#2f8a46" stroke-width="1"/><circle cx="10.500" cy="11" r=".9" fill="#2f8a46"/></svg>
<div class="t " style="left:57px;top:289px;;letter-spacing:0.040px">Makefile</div>
<svg class="i" style="left:7px;top:314px" width="9" height="6" viewBox="0 0 9 6"><path d="M0.500 0.600l4 4 4-4" stroke="#3c3c3c" stroke-width="1.500" fill="none"/></svg>
<svg class="i" style="left:20px;top:308px" width="16" height="16" viewBox="0 0 16 16" ><path d="M1.500 3.500h4l1 1.500h4.500v4h-9.500z" fill="#f8df98" stroke="#b98f3a" stroke-width=".9"/><path d="M.800 13.500l2.700-5.500h12l-3.500 5.500z" fill="#6c9fe4" stroke="#3862ae" stroke-width=".9"/><text x="9.800" y="6.300" font-family="Liberation Sans" font-weight="bold" font-size="8" fill="#1d4a9a">C</text><rect x="0" y="8.500" width="7" height="7.500" fill="#d9303c"/><path d="M1.800 10.500l3.400 3.500M5.200 10.500l-3.400 3.500" stroke="#fff" stroke-width="1.300"/></svg>
<div class="t " style="left:41px;top:307px;;letter-spacing:-0.160px">MemoryLeaks</div>
<svg class="i" style="left:23px;top:332px" width="9" height="6" viewBox="0 0 9 6"><path d="M0.500 0.600l4 4 4-4" stroke="#3c3c3c" stroke-width="1.500" fill="none"/></svg>
<svg class="i" style="left:36px;top:326px" width="16" height="16" viewBox="0 0 16 16" ><path d="M1.500 13.500v-9h3.500l1.500 1.500h3" fill="#f6dc98" stroke="#b4883a" stroke-width=".9"/><path d="M1.500 13.500l2.500-6h11.500l-3 6z" fill="#f7dfa0" stroke="#b4883a" stroke-width=".9"/><rect x="8.500" y="1" width="6.500" height="6.500" rx="1" fill="#7aa0dc" stroke="#4a72b8" stroke-width=".7"/><text x="9.800" y="6.300" font-family="Liberation Sans" font-weight="bold" font-size="6" fill="#fff">c</text></svg>
<div class="t " style="left:57px;top:325px;;letter-spacing:-0.599px">src</div>
<svg class="i" style="left:39px;top:350px" width="9" height="6" viewBox="0 0 9 6"><path d="M0.500 0.600l4 4 4-4" stroke="#3c3c3c" stroke-width="1.500" fill="none"/></svg>
<svg class="i" style="left:52px;top:344px" width="16" height="16" viewBox="0 0 16 16" ><path d="M3.500 1.500h6.500l3.500 3.500v9.500h-10z" fill="#fbfbf7" stroke="#b59650" stroke-width="1"/><path d="M10 1.500v3.500h3.500" fill="#f0dfae" stroke="#b59650" stroke-width=".7"/><text x="4" y="12.800" font-family="Liberation Sans" font-weight="bold" font-size="9.500" fill="#2f66bc" textLength="9">.c</text></svg>
<div class="t " style="left:73px;top:343px;;letter-spacing:-0.166px">memory_leak.c</div>
<svg class="i" style="left:68px;top:362px" width="16" height="16" viewBox="0 0 16 16" ><rect x="3" y="3" width="4.600" height="5" fill="#4f80bc"/><path d="M9 3h5v10h-8v-3.700h3z" fill="#2f6cab"/><path d="M3.500 8.200c.3-.5.800-.5 1.100 0l2.800 6c.3.700 0 1.300-.8 1.300h-5.200c-.8 0-1.100-.6-.8-1.300z" fill="#f8cf5a" stroke="#c98a1a" stroke-width=".9"/><path d="M4 10v3M4 13.800v.9" stroke="#2a1a00" stroke-width="1.200"/></svg>
<div class="t " style="left:89px;top:361px;;letter-spacing:0.049px">stdio.h</div>
<svg class="i" style="left:68px;top:380px" width="16" height="16" viewBox="0 0 16 16" ><rect x="3" y="3" width="4.600" height="5" fill="#4f80bc"/><path d="M9 3h5v10h-8v-3.700h3z" fill="#2f6cab"/><path d="M3.500 8.200c.3-.5.800-.5 1.100 0l2.800 6c.3.700 0 1.300-.8 1.300h-5.200c-.8 0-1.100-.6-.8-1.300z" fill="#f8cf5a" stroke="#c98a1a" stroke-width=".9"/><path d="M4 10v3M4 13.800v.9" stroke="#2a1a00" stroke-width="1.200"/></svg>
<div class="t " style="left:89px;top:379px;;letter-spacing:0.022px">stdlib.h</div>
<svg class="i" style="left:68px;top:398px" width="16" height="16" viewBox="0 0 16 16" ><rect x="3" y="3" width="4.600" height="5" fill="#4f80bc"/><path d="M9 3h5v10h-8v-3.700h3z" fill="#2f6cab"/><path d="M3.500 8.200c.3-.5.800-.5 1.100 0l2.800 6c.3.700 0 1.300-.8 1.300h-5.200c-.8 0-1.100-.6-.8-1.300z" fill="#f8cf5a" stroke="#c98a1a" stroke-width=".9"/><path d="M4 10v3M4 13.800v.9" stroke="#2a1a00" stroke-width="1.200"/></svg>
<div class="t " style="left:89px;top:397px;;letter-spacing:0.120px">time.h</div>
<svg class="i" style="left:68px;top:416px" width="16" height="16" viewBox="0 0 16 16" ><rect x="3" y="3" width="4.600" height="5" fill="#4f80bc"/><path d="M9 3h5v10h-8v-3.700h3z" fill="#2f6cab"/><path d="M3.500 8.200c.3-.5.800-.5 1.100 0l2.800 6c.3.700 0 1.300-.8 1.300h-5.200c-.8 0-1.100-.6-.8-1.300z" fill="#f8cf5a" stroke="#c98a1a" stroke-width=".9"/><path d="M4 10v3M4 13.800v.9" stroke="#2a1a00" stroke-width="1.200"/></svg>
<div class="t " style="left:89px;top:415px;;letter-spacing:0.034px">unistd.h</div>
<svg class="i" style="left:68px;top:434px" width="16" height="16" viewBox="0 0 16 16" ><path d="M6.800 3l-2 10.500M11.300 3l-2 10.500M3.300 6.300h10.200M2.500 10.200h10.200" stroke="#2f5f9e" stroke-width="1.500" fill="none"/></svg>
<div class="t " style="left:89px;top:433px;;letter-spacing:-0.564px">MAXNUMSIZES</div>
<svg class="i" style="left:68px;top:452px" width="16" height="16" viewBox="0 0 16 16" ><circle cx="8.500" cy="8.500" r="4.200" fill="#8fb4e4" stroke="#2f5fa6" stroke-width=".9"/><path d="M4.300 8a4.200 4.200 0 0 1 8.400 0z" fill="#3f74be"/><path d="M4.300 8.500h8.400" stroke="#e4eefb" stroke-width="1"/></svg>
<div class="t " style="left:89px;top:451px;;letter-spacing:-0.241px">nsizes : int</div>
<svg class="i" style="left:68px;top:470px" width="16" height="16" viewBox="0 0 16 16" ><circle cx="8.500" cy="8.500" r="4.200" fill="#8fb4e4" stroke="#2f5fa6" stroke-width=".9"/><path d="M4.300 8a4.200 4.200 0 0 1 8.400 0z" fill="#3f74be"/><path d="M4.300 8.500h8.400" stroke="#e4eefb" stroke-width="1"/></svg>
<div class="t " style="left:89px;top:469px;;letter-spacing:-0.016px">progname : char*</div>
<svg class="i" style="left:68px;top:488px" width="16" height="16" viewBox="0 0 16 16" ><circle cx="8.500" cy="8.500" r="4.200" fill="#8fb4e4" stroke="#2f5fa6" stroke-width=".9"/><path d="M4.300 8a4.200 4.200 0 0 1 8.400 0z" fill="#3f74be"/><path d="M4.300 8.500h8.400" stroke="#e4eefb" stroke-width="1"/></svg>
<div class="t " style="left:89px;top:487px;;letter-spacing:-0.168px">sizes : int[]</div>
<svg class="i" style="left:68px;top:506px" width="16" height="16" viewBox="0 0 16 16" ><circle cx="8.500" cy="8.500" r="4.200" fill="#8fb4e4" stroke="#2f5fa6" stroke-width=".9"/><path d="M4.300 8a4.200 4.200 0 0 1 8.400 0z" fill="#3f74be"/><path d="M4.300 8.500h8.400" stroke="#e4eefb" stroke-width="1"/></svg>
<div class="t " style="left:89px;top:505px;;letter-spacing:-0.057px">sleeptime : struct timespec</div>
<svg class="i" style="left:68px;top:524px" width="16" height="16" viewBox="0 0 16 16" ><circle cx="8.500" cy="8.500" r="4.200" fill="#8fb4e4" stroke="#2f5fa6" stroke-width=".9"/><path d="M4.300 8a4.200 4.200 0 0 1 8.400 0z" fill="#3f74be"/><path d="M4.300 8.500h8.400" stroke="#e4eefb" stroke-width="1"/></svg>
<div class="t " style="left:89px;top:523px;;letter-spacing:-0.128px">verbose : int</div>
<svg class="i" style="left:68px;top:542px" width="16" height="16" viewBox="0 0 16 16" ><circle cx="8.500" cy="8.500" r="3.100" fill="#6db878" stroke="#2f7f3f" stroke-width="1"/></svg>
<div class="t " style="left:89px;top:541px;;letter-spacing:-0.124px">elaborate_leak(void) : void</div>
<svg class="i" style="left:68px;top:560px" width="16" height="16" viewBox="0 0 16 16" ><circle cx="8.500" cy="8.500" r="3.100" fill="#6db878" stroke="#2f7f3f" stroke-width="1"/></svg>
<div class="t " style="left:89px;top:559px;;letter-spacing:0.143px">function1(void**) : void</div>
<svg class="i" style="left:68px;top:578px" width="16" height="16" viewBox="0 0 16 16" ><circle cx="8.500" cy="8.500" r="3.100" fill="#6db878" stroke="#2f7f3f" stroke-width="1"/></svg>
<div class="t " style="left:89px;top:577px;;letter-spacing:0.143px">function2(void**) : void</div>
<svg class="i" style="left:68px;top:596px" width="16" height="16" viewBox="0 0 16 16" ><circle cx="8.500" cy="8.500" r="3.100" fill="#6db878" stroke="#2f7f3f" stroke-width="1"/></svg>
<div class="t " style="left:89px;top:595px;;letter-spacing:0.143px">function3(void**) : void</div>
<svg class="i" style="left:68px;top:614px" width="16" height="16" viewBox="0 0 16 16" ><circle cx="8.500" cy="8.500" r="3.100" fill="#6db878" stroke="#2f7f3f" stroke-width="1"/></svg>
<div class="t " style="left:89px;top:613px;;letter-spacing:0.143px">function4(void**) : void</div>
<svg class="i" style="left:68px;top:632px" width="16" height="16" viewBox="0 0 16 16" ><circle cx="8.500" cy="8.500" r="3.100" fill="#6db878" stroke="#2f7f3f" stroke-width="1"/></svg>
<div class="t " style="left:89px;top:631px;;letter-spacing:0.121px">main(int, char*[]) : int</div>
<svg class="i" style="left:68px;top:650px" width="16" height="16" viewBox="0 0 16 16" ><circle cx="8.500" cy="8.500" r="3.100" fill="#6db878" stroke="#2f7f3f" stroke-width="1"/></svg>
<div class="t " style="left:89px;top:649px;;letter-spacing:0.069px">options(int, char**) : void</div>
<svg class="i" style="left:36px;top:668px" width="16" height="16" viewBox="0 0 16 16" ><path d="M1.500 .500h7l3.500 3.500v10.500h-10.500z" fill="#fcfcfc" stroke="#b4b4b4" stroke-width=".9"/><path d="M8.500 .500v3.500h3.500" fill="#f3e7c0" stroke="#c2b27a" stroke-width=".7"/><circle cx="10.500" cy="11" r="4.500" fill="#fff" stroke="#2f8a46" stroke-width="1.100"/><circle cx="10.500" cy="11" r="2.400" fill="none" stroke="#2f8a46" stroke-width="1"/><circle cx="10.500" cy="11" r=".9" fill="#2f8a46"/></svg>
<div class="t " style="left:57px;top:667px;;letter-spacing:0.040px">Makefile</div>
<div class="panel" style="left:302px;top:101px;width:668px;height:470px"><div class="tabbar"></div><div class="tab" style="left:229px;width:130px"></div></div>
<svg class="i" style="left:309px;top:106px" width="16" height="16" viewBox="0 0 16 16" ><path d="M3.500 1.500h6.500l3.500 3.500v9.500h-10z" fill="#fbfbf7" stroke="#b59650" stroke-width="1"/><path d="M10 1.500v3.500h3.500" fill="#f0dfae" stroke="#b59650" stroke-width=".7"/><text x="4" y="12.800" font-family="Liberation Sans" font-weight="bold" font-size="9.500" fill="#1f3a78" textLength="9">.h</text></svg>
<div class="t " style="left:327px;top:106px;;letter-spacing:-0.365px">EngPedia.h</div>
<svg class="i" style="left:417px;top:106px" width="16" height="16" viewBox="0 0 16 16" ><path d="M3.500 1.500h6.500l3.500 3.500v9.500h-10z" fill="#fbfbf7" stroke="#b59650" stroke-width="1"/><path d="M10 1.500v3.500h3.500" fill="#f0dfae" stroke="#b59650" stroke-width=".7"/><text x="4" y="12.800" font-family="Liberation Sans" font-weight="bold" font-size="9.500" fill="#2f66bc" textLength="9">.c</text></svg>
<div class="t " style="left:435px;top:106px;;letter-spacing:-0.294px">EngPedia.cpp</div>
<svg class="i" style="left:539px;top:106px" width="16" height="16" viewBox="0 0 16 16" ><path d="M3.500 1.500h6.500l3.500 3.500v9.500h-10z" fill="#fbfbf7" stroke="#b59650" stroke-width="1"/><path d="M10 1.500v3.500h3.500" fill="#f0dfae" stroke="#b59650" stroke-width=".7"/><text x="4" y="12.800" font-family="Liberation Sans" font-weight="bold" font-size="9.500" fill="#2f66bc" textLength="9">.c</text></svg>
<div class="t " style="left:557px;top:106px;;letter-spacing:-0.166px">memory_leak.c</div>
<svg class="i" style="left:645px;top:111px" width="10" height="10" viewBox="0 0 10 10"><path d="M0.5 0.5l9 9M9.5 0.5l-9 9" stroke="#222" stroke-width="1.1" fill="none"/></svg>
<svg class="i" style="left:926px;top:109px" width="12" height="12" viewBox="0 0 12 12"><rect x="0.5" y="0.5" width="9" height="3" fill="#fff" stroke="#000"/></svg><svg class="i" style="left:949px;top:109px" width="12" height="12" viewBox="0 0 12 12"><rect x="0.5" y="0.5" width="9" height="9" fill="#fff" stroke="#000"/><path d="M0.5 2.5h9" stroke="#000"/></svg>
<div class="a mono" style="left:0;top:127px;width:940px;height:426px;overflow:hidden"><div class="a" style="left:0;top:2px">
<div class="a" style="left:303px;top:-2px;width:12px;height:426px;background:#f8f8f8"></div>
<div class="ln" style="top:0px">31</div><div class="cl" style="top:0px"><span class="k">void</span> <span class="f">function1</span>( <span class="k">void</span> ** ptr);</div>
<div class="ln" style="top:15px">32</div><div class="cl" style="top:15px"><span class="k">void</span> <span class="f">function2</span>( <span class="k">void</span> ** ptr);</div>
<div class="ln" style="top:30px">33</div><div class="cl" style="top:30px"><span class="k">void</span> <span class="f">function3</span>( <span class="k">void</span> ** ptr);</div>
<div class="ln" style="top:45px">34</div><div class="cl" style="top:45px"><span class="k">void</span> <span class="f">function4</span>( <span class="k">void</span> ** ptr);</div>
<div class="ln" style="top:60px">35</div><div class="cl" style="top:60px"></div>
<div class="ln" style="top:75px">36</div><div class="cl" style="top:75px"><span class="k">#define</span> MAXNUMSIZES 5</div>
<div class="ln" style="top:90px">37</div><div class="cl" style="top:90px"><span class="k">int</span> nsizes, sizes[MAXNUMSIZES]; <span class="c">/* sizes of <span class="sq">mallocs</span> to do */</span></div>
<div class="ln" style="top:105px">38</div><div class="cl" style="top:105px"><span class="k">struct</span> <span style="color:#005032">timespec</span> sleeptime;          <span class="c">/* time to sleep between <span class="sq">mallocs</span> in</span></div>
<div class="ln" style="top:120px">39</div><div class="cl" style="top:120px">                                       <span class="c">milliseconds */</span></div>
<div class="ln" style="top:135px">40</div><div class="cl" style="top:135px"></div>
<div class="ln" style="top:150px">41</div><div class="cl" style="top:150px"><span class="k">char</span> *progname;</div>
<div class="ln" style="top:165px">42</div><div class="cl" style="top:165px"><span class="k">int</span> verbose = 0;</div>
<div class="ln" style="top:180px">43</div><div class="cl" style="top:180px"></div>
<div class="ln" style="top:195px">44</div><div class="cl" style="top:195px"><span class="k">int</span></div>
<div class="ln" style="top:210px">45</div><div class="cl" style="top:210px"><span class="f">main</span>(<span class="k">int</span> argc, <span class="k">char</span> *argv[])</div>
<div class="ln" style="top:225px">46</div><div class="cl" style="top:225px">{</div>
<div class="ln" style="top:240px">47</div><div class="cl" style="top:240px">    <span class="k">int</span> i;</div>
<div class="ln" style="top:255px">48</div><div class="cl" style="top:255px">    <span class="k">void</span> * aptr;</div>
<div class="ln" style="top:270px">49</div><div class="cl" style="top:270px">    <span class="k">int</span> n = 10;</div>
<div class="ln" style="top:285px">50</div><div class="cl" style="top:285px"></div>
<div class="ln" style="top:300px">51</div><div class="cl" style="top:300px">    progname = argv[0];</div>
<div class="ln" style="top:315px">52</div><div class="cl" style="top:315px"></div>
<div class="ln" style="top:330px">53</div><div class="cl" style="top:330px">    setvbuf(stdout, NULL, _IOLBF, BUFSIZ );</div>
<div class="ln" style="top:345px">54</div><div class="cl" style="top:345px"></div>
<div class="ln" style="top:360px">55</div><div class="cl" style="top:360px">    printf (<span class="s">"%s:  starting...\n"</span>, progname);</div>
<div class="ln" style="top:375px">56</div><div class="cl" style="top:375px"></div>
<div class="ln" style="top:390px">57</div><div class="cl" style="top:390px">    options (argc, argv);</div>
<div class="ln" style="top:405px">58</div><div class="cl" style="top:405px"></div>
<div class="ln" style="top:420px">59</div><div class="cl" style="top:420px">    <span class="k">while</span> (n--) {</div>
</div></div>
<svg class="i" style="left:647px;top:229.5px" width="50" height="3" viewBox="0 0 50 3"><path d="M0 2.500l2-2l2 2l2-2l2 2l2-2l2 2l2-2l2 2l2-2l2 2l2-2l2 2l2-2l2 2l2-2l2 2l2-2l2 2l2-2l2 2l2-2l2 2l2-2l2 2l2-2l2 2" stroke="#e46a4a" stroke-width=".9" fill="none"/></svg>
<svg class="i" style="left:766px;top:244.5px" width="50" height="3" viewBox="0 0 50 3"><path d="M0 2.500l2-2l2 2l2-2l2 2l2-2l2 2l2-2l2 2l2-2l2 2l2-2l2 2l2-2l2 2l2-2l2 2l2-2l2 2l2-2l2 2l2-2l2 2l2-2l2 2l2-2l2 2" stroke="#e46a4a" stroke-width=".9" fill="none"/></svg>
<div class="a" style="left:940px;top:127px;width:16px;height:426px;background:#f0f0f0"></div><div class="a" style="left:940px;top:222px;width:15px;height:76px;background:#cdcdcd"></div><svg class="i" style="left:943.5px;top:133px" width="9" height="6" viewBox="0 0 9 6"><path d="M1 5.200l3.500-3.500 3.500 3.500" stroke="#505050" stroke-width="1.900" fill="none"/></svg><svg class="i" style="left:943.5px;top:541px" width="9" height="6" viewBox="0 0 9 6"><path d="M1 0.800l3.500 3.500 3.500-3.500" stroke="#505050" stroke-width="1.900" fill="none"/></svg>
<div class="a" style="left:958px;top:127px;width:11px;height:426px;background:#f0f0f0"></div>
<svg class="i" style="left:958px;top:204px" width="9" height="13" viewBox="0 0 9 13"><rect x="0.5" y="0.5" width="8" height="12" fill="#ffe9a8" stroke="#e8b04a"/><path d="M1 3.5h7M1 6.5h7M1 9.5h7" stroke="#e8b04a"/></svg>
<div class="a" style="left:303px;top:553px;width:666px;height:17px;background:#f0f0f0"></div>
<div class="a" style="left:303px;top:553px;width:34px;height:17px;background:#f8f8f8"></div>
<svg class="i" style="left:342px;top:557px" width="6" height="9" viewBox="0 0 6 9"><path d="M5.200 1l-3.500 3.500 3.500 3.500" stroke="#b4b4b4" stroke-width="1.900" fill="none"/></svg>
<svg class="i" style="left:928px;top:557px" width="6" height="9" viewBox="0 0 6 9"><path d="M0.800 1l3.500 3.500-3.500 3.500" stroke="#b4b4b4" stroke-width="1.900" fill="none"/></svg>
<div class="panel" style="left:974px;top:101px;width:223px;height:470px"><div class="tabbar" style="height:47px;background:#f4f4f4"></div><div class="tabbar"></div><div class="tab" style="left:0;width:89px"></div></div>
<svg class="i" style="left:979px;top:106px" width="16" height="16" viewBox="0 0 16 16" ><rect x="1.500" y="1.500" width="5" height="5" fill="#eef4fc" stroke="#3f78c4" stroke-width="1.100"/><rect x="1.500" y="10.500" width="5" height="5" fill="#eef4fc" stroke="#3f78c4" stroke-width="1.100"/><rect x="8.500" y="6.500" width="3" height="3" fill="#eef4fc" stroke="#3f78c4" stroke-width="1"/><path d="M9 3.500h6M13 8h2.500M9 13h6" stroke="#3f78c4" stroke-width="1.200"/></svg>
<div class="t " style="left:998px;top:106px;;letter-spacing:0.111px">Outline</div>
<svg class="i" style="left:1047px;top:111px" width="10" height="10" viewBox="0 0 10 10"><path d="M0.5 0.5l9 9M9.5 0.5l-9 9" stroke="#222" stroke-width="1.1" fill="none"/></svg>
<svg class="i" style="left:1069px;top:106px" width="16" height="16" viewBox="0 0 16 16" ><circle cx="8" cy="8" r="6.500" fill="#fff" stroke="#3f9a50" stroke-width="1.200"/><circle cx="8" cy="8" r="3.800" fill="#e8f5ea" stroke="#3f9a50" stroke-width="1.200"/><circle cx="8" cy="8" r="1.900" fill="#3f9a50"/></svg>
<div class="t " style="left:1088px;top:106px;;letter-spacing:-0.335px">Build T...</div>
<svg class="i" style="left:1153px;top:109px" width="12" height="12" viewBox="0 0 12 12"><rect x="0.5" y="0.5" width="9" height="3" fill="#fff" stroke="#000"/></svg><svg class="i" style="left:1176px;top:109px" width="12" height="12" viewBox="0 0 12 12"><rect x="0.5" y="0.5" width="9" height="9" fill="#fff" stroke="#000"/><path d="M0.5 2.5h9" stroke="#000"/></svg>
<svg class="i" style="left:1040px;top:130px" width="16" height="16" viewBox="0 0 16 16" ><rect x="1.500" y="2.500" width="10" height="10" fill="#dcebf9" stroke="#a4b2d6" stroke-width="1"/><rect x="3.500" y="4.500" width="10" height="10" fill="#eef6fd" stroke="#8494c4" stroke-width="1"/><path d="M5.500 9.500h6.500" stroke="#1f4f9a" stroke-width="1.500"/></svg>
<svg class="i" style="left:1061px;top:130px" width="16" height="16" viewBox="0 0 16 16" ><path d="M3.500 3v11M1 11.500l2.500 3 2.500-3" stroke="#777" stroke-width="1.100" fill="none"/><text x="5.500" y="8" font-family="Liberation Serif" font-weight="bold" font-size="12.500" fill="#188a72">a</text><text x="9" y="16.500" font-family="Liberation Serif" font-weight="bold" font-size="12.500" fill="#8a1fa0">z</text></svg>
<svg class="i" style="left:1084px;top:130px" width="16" height="16" viewBox="0 0 16 16" ><circle cx="8.500" cy="8" r="5" fill="#c8dff6" stroke="#3f86d4" stroke-width="1.500"/><circle cx="8.500" cy="8" r="2" fill="#fff"/><path d="M1 1l14 14" stroke="#2a2a7a" stroke-width="1.300"/></svg>
<svg class="i" style="left:1107px;top:130px" width="16" height="16" viewBox="0 0 16 16" ><circle cx="7" cy="10" r="3.500" fill="#b4b4b4" stroke="#8a8a8a"/><path d="M1 4l13 11" stroke="#2a2a7a" stroke-width="1.300"/><text x="10" y="7" font-family="Liberation Sans" font-weight="bold" font-size="8" fill="#d0202c">S</text></svg>
<svg class="i" style="left:1130px;top:130px" width="16" height="16" viewBox="0 0 16 16" ><circle cx="8.500" cy="8.500" r="3.100" fill="#6db878" stroke="#2f7f3f" stroke-width="1"/></svg>
<svg class="i" style="left:1153px;top:130px" width="16" height="16" viewBox="0 0 16 16" ><path d="M6 2.500v11M10 2.500v11M2.500 6h11M2.500 10h11" stroke="#000" stroke-width="2"/><path d="M2 2l12 12" stroke="#000" stroke-width="1.200"/><path d="M3 1.500l11.500 11.500" stroke="#fff" stroke-width=".6"/></svg>
<svg class="i" style="left:1181px;top:130px" width="6" height="16" viewBox="0 0 6 16"><g fill="#fff" stroke="#5a5a5a" stroke-width="1"><circle cx="3.200" cy="2.700" r="2"/><circle cx="3.200" cy="8" r="2"/><circle cx="3.200" cy="13.200" r="2"/></g></svg>
<svg class="i" style="left:1000px;top:150px" width="16" height="16" viewBox="0 0 16 16" ><rect x="3" y="3" width="4.600" height="5" fill="#4f80bc"/><path d="M9 3h5v10h-8v-3.700h3z" fill="#2f6cab"/><path d="M3.500 8.200c.3-.5.800-.5 1.100 0l2.800 6c.3.700 0 1.300-.8 1.300h-5.200c-.8 0-1.100-.6-.8-1.300z" fill="#f8cf5a" stroke="#c98a1a" stroke-width=".9"/><path d="M4 10v3M4 13.800v.9" stroke="#2a1a00" stroke-width="1.200"/></svg>
<div class="t " style="left:1027px;top:149px;;letter-spacing:0.049px">stdio.h</div>
<svg class="i" style="left:1000px;top:168px" width="16" height="16" viewBox="0 0 16 16" ><rect x="3" y="3" width="4.600" height="5" fill="#4f80bc"/><path d="M9 3h5v10h-8v-3.700h3z" fill="#2f6cab"/><path d="M3.500 8.200c.3-.5.800-.5 1.100 0l2.800 6c.3.700 0 1.300-.8 1.300h-5.200c-.8 0-1.100-.6-.8-1.300z" fill="#f8cf5a" stroke="#c98a1a" stroke-width=".9"/><path d="M4 10v3M4 13.800v.9" stroke="#2a1a00" stroke-width="1.200"/></svg>
<div class="t " style="left:1027px;top:167px;;letter-spacing:0.022px">stdlib.h</div>
<svg class="i" style="left:1000px;top:186px" width="16" height="16" viewBox="0 0 16 16" ><rect x="3" y="3" width="4.600" height="5" fill="#4f80bc"/><path d="M9 3h5v10h-8v-3.700h3z" fill="#2f6cab"/><path d="M3.500 8.200c.3-.5.800-.5 1.100 0l2.800 6c.3.700 0 1.300-.8 1.300h-5.200c-.8 0-1.100-.6-.8-1.300z" fill="#f8cf5a" stroke="#c98a1a" stroke-width=".9"/><path d="M4 10v3M4 13.800v.9" stroke="#2a1a00" stroke-width="1.200"/></svg>
<div class="t " style="left:1027px;top:185px;;letter-spacing:0.120px">time.h</div>
<svg class="i" style="left:1000px;top:204px" width="16" height="16" viewBox="0 0 16 16" ><rect x="3" y="3" width="4.600" height="5" fill="#4f80bc"/><path d="M9 3h5v10h-8v-3.700h3z" fill="#2f6cab"/><path d="M3.500 8.200c.3-.5.800-.5 1.100 0l2.800 6c.3.700 0 1.300-.8 1.300h-5.200c-.8 0-1.100-.6-.8-1.300z" fill="#f8cf5a" stroke="#c98a1a" stroke-width=".9"/><path d="M4 10v3M4 13.800v.9" stroke="#2a1a00" stroke-width="1.200"/></svg>
<div class="t " style="left:1027px;top:203px;;letter-spacing:0.034px">unistd.h</div>
<svg class="i" style="left:1000px;top:222px" width="16" height="16" viewBox="0 0 16 16" ><path d="M2 8.500h12M5.500 4v9M11.500 4v9" stroke="#3a9648" stroke-width="1.200" fill="none"/><path d="M7.500 2.500h2M7.500 14.500h2" stroke="#3a9648" stroke-width="1"/></svg>
<div class="t " style="left:1027px;top:221px;;letter-spacing:0.069px">options(int, char**)<span class="ty"> : void</span></div>
<svg class="i" style="left:1000px;top:240px" width="16" height="16" viewBox="0 0 16 16" ><path d="M2 8.500h12M5.500 4v9M11.500 4v9" stroke="#3a9648" stroke-width="1.200" fill="none"/><path d="M7.500 2.500h2M7.500 14.500h2" stroke="#3a9648" stroke-width="1"/></svg>
<div class="t " style="left:1027px;top:239px;;letter-spacing:-0.124px">elaborate_leak(void)<span class="ty"> : void</span></div>
<svg class="i" style="left:1000px;top:258px" width="16" height="16" viewBox="0 0 16 16" ><path d="M2 8.500h12M5.500 4v9M11.500 4v9" stroke="#3a9648" stroke-width="1.200" fill="none"/><path d="M7.500 2.500h2M7.500 14.500h2" stroke="#3a9648" stroke-width="1"/></svg>
<div class="t " style="left:1027px;top:257px;;letter-spacing:0.143px">function1(void**)<span class="ty"> : void</span></div>
<svg class="i" style="left:1000px;top:276px" width="16" height="16" viewBox="0 0 16 16" ><path d="M2 8.500h12M5.500 4v9M11.500 4v9" stroke="#3a9648" stroke-width="1.200" fill="none"/><path d="M7.500 2.500h2M7.500 14.500h2" stroke="#3a9648" stroke-width="1"/></svg>
<div class="t " style="left:1027px;top:275px;;letter-spacing:0.143px">function2(void**)<span class="ty"> : void</span></div>
<svg class="i" style="left:1000px;top:294px" width="16" height="16" viewBox="0 0 16 16" ><path d="M2 8.500h12M5.500 4v9M11.500 4v9" stroke="#3a9648" stroke-width="1.200" fill="none"/><path d="M7.500 2.500h2M7.500 14.500h2" stroke="#3a9648" stroke-width="1"/></svg>
<div class="t " style="left:1027px;top:293px;;letter-spacing:0.143px">function3(void**)<span class="ty"> : void</span></div>
<svg class="i" style="left:1000px;top:312px" width="16" height="16" viewBox="0 0 16 16" ><path d="M2 8.500h12M5.500 4v9M11.500 4v9" stroke="#3a9648" stroke-width="1.200" fill="none"/><path d="M7.500 2.500h2M7.500 14.500h2" stroke="#3a9648" stroke-width="1"/></svg>
<div class="t " style="left:1027px;top:311px;;letter-spacing:0.143px">function4(void**)<span class="ty"> : void</span></div>
<svg class="i" style="left:1000px;top:330px" width="16" height="16" viewBox="0 0 16 16" ><path d="M6.800 3l-2 10.500M11.300 3l-2 10.500M3.300 6.300h10.200M2.500 10.200h10.200" stroke="#2f5f9e" stroke-width="1.500" fill="none"/></svg>
<div class="t " style="left:1027px;top:329px;;letter-spacing:-0.564px">MAXNUMSIZES</div>
<svg class="i" style="left:1000px;top:348px" width="16" height="16" viewBox="0 0 16 16" ><circle cx="8.500" cy="8.500" r="4.200" fill="#8fb4e4" stroke="#2f5fa6" stroke-width=".9"/><path d="M4.300 8a4.200 4.200 0 0 1 8.400 0z" fill="#3f74be"/><path d="M4.300 8.500h8.400" stroke="#e4eefb" stroke-width="1"/></svg>
<div class="t " style="left:1027px;top:347px;;letter-spacing:-0.241px">nsizes<span class="ty"> : int</span></div>
<svg class="i" style="left:1000px;top:366px" width="16" height="16" viewBox="0 0 16 16" ><circle cx="8.500" cy="8.500" r="4.200" fill="#8fb4e4" stroke="#2f5fa6" stroke-width=".9"/><path d="M4.300 8a4.200 4.200 0 0 1 8.400 0z" fill="#3f74be"/><path d="M4.300 8.500h8.400" stroke="#e4eefb" stroke-width="1"/></svg>
<div class="t " style="left:1027px;top:365px;;letter-spacing:-0.168px">sizes<span class="ty"> : int[]</span></div>
<svg class="i" style="left:1000px;top:384px" width="16" height="16" viewBox="0 0 16 16" ><circle cx="8.500" cy="8.500" r="4.200" fill="#8fb4e4" stroke="#2f5fa6" stroke-width=".9"/><path d="M4.300 8a4.200 4.200 0 0 1 8.400 0z" fill="#3f74be"/><path d="M4.300 8.500h8.400" stroke="#e4eefb" stroke-width="1"/></svg>
<div class="t " style="left:1027px;top:383px;;letter-spacing:-0.057px">sleeptime<span class="ty"> : struct timespec</span></div>
<svg class="i" style="left:1000px;top:402px" width="16" height="16" viewBox="0 0 16 16" ><circle cx="8.500" cy="8.500" r="4.200" fill="#8fb4e4" stroke="#2f5fa6" stroke-width=".9"/><path d="M4.300 8a4.200 4.200 0 0 1 8.400 0z" fill="#3f74be"/><path d="M4.300 8.500h8.400" stroke="#e4eefb" stroke-width="1"/></svg>
<div class="t " style="left:1027px;top:401px;;letter-spacing:-0.016px">progname<span class="ty"> : char*</span></div>
<svg class="i" style="left:1000px;top:420px" width="16" height="16" viewBox="0 0 16 16" ><circle cx="8.500" cy="8.500" r="4.200" fill="#8fb4e4" stroke="#2f5fa6" stroke-width=".9"/><path d="M4.300 8a4.200 4.200 0 0 1 8.400 0z" fill="#3f74be"/><path d="M4.300 8.500h8.400" stroke="#e4eefb" stroke-width="1"/></svg>
<div class="t " style="left:1027px;top:419px;;letter-spacing:-0.128px">verbose<span class="ty"> : int</span></div>
<svg class="i" style="left:1000px;top:438px" width="16" height="16" viewBox="0 0 16 16" ><circle cx="8.500" cy="8.500" r="3.100" fill="#6db878" stroke="#2f7f3f" stroke-width="1"/></svg>
<div class="t " style="left:1027px;top:437px;;letter-spacing:0.121px">main(int, char*[])<span class="ty"> : int</span></div>
<svg class="i" style="left:1000px;top:456px" width="16" height="16" viewBox="0 0 16 16" ><circle cx="8.500" cy="8.500" r="3.100" fill="#6db878" stroke="#2f7f3f" stroke-width="1"/></svg>
<div class="t " style="left:1027px;top:455px;;letter-spacing:0.069px">options(int, char**)<span class="ty"> : void</span></div>
<svg class="i" style="left:1000px;top:474px" width="16" height="16" viewBox="0 0 16 16" ><circle cx="8.500" cy="8.500" r="3.100" fill="#6db878" stroke="#2f7f3f" stroke-width="1"/></svg>
<div class="t " style="left:1027px;top:473px;;letter-spacing:-0.124px">elaborate_leak(void)<span class="ty"> : void</span></div>
<svg class="i" style="left:1000px;top:492px" width="16" height="16" viewBox="0 0 16 16" ><circle cx="8.500" cy="8.500" r="3.100" fill="#6db878" stroke="#2f7f3f" stroke-width="1"/></svg>
<div class="t " style="left:1027px;top:491px;;letter-spacing:0.143px">function1(void**)<span class="ty"> : void</span></div>
<svg class="i" style="left:1000px;top:510px" width="16" height="16" viewBox="0 0 16 16" ><circle cx="8.500" cy="8.500" r="3.100" fill="#6db878" stroke="#2f7f3f" stroke-width="1"/></svg>
<div class="t " style="left:1027px;top:509px;;letter-spacing:0.143px">function2(void**)<span class="ty"> : void</span></div>
<svg class="i" style="left:1000px;top:528px" width="16" height="16" viewBox="0 0 16 16" ><circle cx="8.500" cy="8.500" r="3.100" fill="#6db878" stroke="#2f7f3f" stroke-width="1"/></svg>
<div class="t " style="left:1027px;top:527px;;letter-spacing:0.143px">function3(void**)<span class="ty"> : void</span></div>
<svg class="i" style="left:1000px;top:546px" width="16" height="16" viewBox="0 0 16 16" ><circle cx="8.500" cy="8.500" r="3.100" fill="#6db878" stroke="#2f7f3f" stroke-width="1"/></svg>
<div class="t " style="left:1027px;top:545px;;letter-spacing:0.143px">function4(void**)<span class="ty"> : void</span></div>
<div class="panel" style="left:1201px;top:101px;width:399px;height:630px"><div class="tabbar"></div><div class="tab" style="left:0;width:118px"></div></div>
<svg class="i" style="left:1206px;top:106px" width="16" height="16" viewBox="0 0 16 16" ><rect x="1.500" y="2.500" width="8" height="9" fill="#e4eefb" stroke="#4f6f9e" stroke-width=".9"/><path d="M3 1v3M5 1v3M7 1v3" stroke="#4f6f9e" stroke-width=".8"/><rect x="3" y="6" width="5" height="3" fill="#3f78c4"/><path d="M9.500 6.500h5v9h-8v-4" fill="#fff" stroke="#666" stroke-width=".8"/><path d="M11 5v3M13 5v3" stroke="#666" stroke-width=".8"/></svg>
<div class="t " style="left:1225px;top:106px;;letter-spacing:-0.410px">Cheat Sheets</div>
<svg class="i" style="left:1303px;top:111px" width="10" height="10" viewBox="0 0 10 10"><path d="M0.5 0.5l9 9M9.5 0.5l-9 9" stroke="#222" stroke-width="1.1" fill="none"/></svg>
<svg class="i" style="left:1507px;top:106px" width="16" height="16" viewBox="0 0 16 16" ><rect x="3.500" y="2.500" width="9" height="12" rx="1" fill="#fdf3d0" stroke="#b4903c" stroke-width="1"/><path d="M5 1.500v2M7 1.500v2M9 1.500v2M11 1.500v2" stroke="#777" stroke-width=".8"/><rect x="5.500" y="7" width="5" height="2.500" fill="#2f5fa8"/></svg>
<svg class="i" style="left:1535px;top:107px" width="6" height="16" viewBox="0 0 6 16"><g fill="#fff" stroke="#5a5a5a" stroke-width="1"><circle cx="3.200" cy="2.700" r="2"/><circle cx="3.200" cy="8" r="2"/><circle cx="3.200" cy="13.200" r="2"/></g></svg>
<svg class="i" style="left:1556px;top:109px" width="12" height="12" viewBox="0 0 12 12"><rect x="0.5" y="0.5" width="9" height="3" fill="#fff" stroke="#000"/></svg><svg class="i" style="left:1579px;top:109px" width="12" height="12" viewBox="0 0 12 12"><rect x="0.5" y="0.5" width="9" height="9" fill="#fff" stroke="#000"/><path d="M0.5 2.5h9" stroke="#000"/></svg>
<div class="a" style="left:1202px;top:127px;width:381px;height:603px;overflow:hidden">
<div class="t b" style="left:6px;top:10px;font-size:16px;color:#464646;line-height:20px;height:20px;margin-top:-1px;letter-spacing:-0.001px">Memory Analysis Tooling</div>
<div class="a" style="left:16px;top:235px;width:359px;height:169px;background:#ebf4fc"></div>
<div class="a" style="left:16px;top:450px;width:359px;height:160px;background:#ebf4fc"></div>
<svg class="i" style="left:3px;top:41px" width="11" height="9" viewBox="0 0 11 9"><path d="M0.8 4.5l3 3L10.2 1" stroke="#3c9a5a" stroke-width="1.2" fill="none"/></svg>
<svg class="i" style="left:19px;top:43px" width="5" height="8" viewBox="0 0 5 8"><path d="M0 0v8l4.5-4z" fill="#000"/></svg>
<div class="t " style="left:31px;top:38px;;letter-spacing:0.233px">Introduction</div>
<div class="a" style="left:357px;top:38px;width:18px;height:18px;background:#d6e9f8"></div><svg class="i" style="left:359px;top:40px" width="14" height="14" viewBox="0 0 14 14"><circle cx="7" cy="7" r="6" fill="#fff" stroke="#4a5a78" stroke-width="1"/><path d="M4.8 5.4c0-1.4 1-2.1 2.2-2.1s2.2.8 2.2 1.9c0 1.5-2 1.6-2 3.2" stroke="#4a5a78" stroke-width="1.2" fill="none"/><rect x="6.5" y="9.6" width="1.3" height="1.3" fill="#4a5a78"/></svg>
<svg class="i" style="left:18px;top:67px" width="8" height="5" viewBox="0 0 8 5"><path d="M0 0h8l-4 4.5z" fill="#000"/></svg>
<div class="t b" style="left:31px;top:59px;;letter-spacing:-0.074px">Cheat Sheet Introduction</div>
<svg class="i" style="left:359px;top:61px" width="14" height="14" viewBox="0 0 14 14"><circle cx="7" cy="7" r="6" fill="#fff" stroke="#4a5a78" stroke-width="1"/><path d="M4.8 5.4c0-1.4 1-2.1 2.2-2.1s2.2.8 2.2 1.9c0 1.5-2 1.6-2 3.2" stroke="#4a5a78" stroke-width="1.2" fill="none"/><rect x="6.5" y="9.6" width="1.3" height="1.3" fill="#4a5a78"/></svg>
<svg class="i" style="left:19px;top:200px" width="5" height="8" viewBox="0 0 5 8"><path d="M0 0v8l4.5-4z" fill="#000"/></svg>
<div class="t " style="left:31px;top:195px;;letter-spacing:-0.141px">Create a Sample Project for Memory Analysis</div>
<svg class="i" style="left:18px;top:222px" width="8" height="5" viewBox="0 0 8 5"><path d="M0 0h8l-4 4.5z" fill="#000"/></svg>
<div class="t " style="left:31px;top:214px;;letter-spacing:-0.034px">Build the Project</div>
<div class="a" style="left:357px;top:214px;width:18px;height:18px;background:#d6e9f8"></div><svg class="i" style="left:359px;top:216px" width="14" height="14" viewBox="0 0 14 14"><circle cx="7" cy="7" r="6" fill="#fff" stroke="#4a5a78" stroke-width="1"/><path d="M4.8 5.4c0-1.4 1-2.1 2.2-2.1s2.2.8 2.2 1.9c0 1.5-2 1.6-2 3.2" stroke="#4a5a78" stroke-width="1.2" fill="none"/><rect x="6.5" y="9.6" width="1.3" height="1.3" fill="#4a5a78"/></svg>
<svg class="i" style="left:19px;top:414px" width="5" height="8" viewBox="0 0 5 8"><path d="M0 0v8l4.5-4z" fill="#000"/></svg>
<div class="t " style="left:31px;top:409px;;letter-spacing:-0.030px">Run MemoryErrors application on the target</div>
<div class="a" style="left:357px;top:409px;width:18px;height:18px;background:#d6e9f8"></div><svg class="i" style="left:359px;top:411px" width="14" height="14" viewBox="0 0 14 14"><circle cx="7" cy="7" r="6" fill="#fff" stroke="#4a5a78" stroke-width="1"/><path d="M4.8 5.4c0-1.4 1-2.1 2.2-2.1s2.2.8 2.2 1.9c0 1.5-2 1.6-2 3.2" stroke="#4a5a78" stroke-width="1.2" fill="none"/><rect x="6.5" y="9.6" width="1.3" height="1.3" fill="#4a5a78"/></svg>
<svg class="i" style="left:18px;top:438px" width="8" height="5" viewBox="0 0 8 5"><path d="M0 0h8l-4 4.5z" fill="#000"/></svg>
<div class="t " style="left:31px;top:430px;;letter-spacing:-0.008px">Navigate through the Memory Errors</div>
<div class="a" style="left:357px;top:430px;width:18px;height:18px;background:#d6e9f8"></div><svg class="i" style="left:359px;top:432px" width="14" height="14" viewBox="0 0 14 14"><circle cx="7" cy="7" r="6" fill="#fff" stroke="#4a5a78" stroke-width="1"/><path d="M4.8 5.4c0-1.4 1-2.1 2.2-2.1s2.2.8 2.2 1.9c0 1.5-2 1.6-2 3.2" stroke="#4a5a78" stroke-width="1.2" fill="none"/><rect x="6.5" y="9.6" width="1.3" height="1.3" fill="#4a5a78"/></svg>
<div class="t b" style="left:22px;top:84px;;letter-spacing:-0.036px">If you need information about how to work with Cheat</div>
<div class="t b" style="left:22px;top:99px;;letter-spacing:-0.102px">Sheets, click on the button with the question mark on the</div>
<div class="t b" style="left:22px;top:114px;;letter-spacing:-0.128px">right. To see the contents of the next instruction, you must</div>
<div class="t b" style="left:22px;top:129px;;letter-spacing:-0.250px">complete all tasks by clicking on &#x27;Click to Complete&#x27;, or by</div>
<div class="t b" style="left:22px;top:144px;;letter-spacing:-0.018px">performing the auto-complete command.</div>
<svg class="i" style="left:25px;top:168px" width="16" height="16" viewBox="0 0 16 16" ><rect x="1.500" y="4.500" width="10" height="10.500" fill="#fffdf0" stroke="#b4903c" stroke-width="1"/><path d="M3 1.500v3M5 1.500v3M7 1.500v3M9 1.500v3" stroke="#7a7a7a" stroke-width=".9"/><path d="M2 1.500h8" stroke="#7a7a7a" stroke-width=".8"/><path d="M4 9.500l2.500 3L13 5" stroke="#3f9a50" stroke-width="1.300" fill="none"/></svg>
<div class="t " style="left:45px;top:168px;color:#1b6ec2;letter-spacing:0.061px">Click when complete</div>
<div class="t b" style="left:22px;top:239px;;letter-spacing:-0.144px">Build the application prior to launching it on the target.</div>
<div class="t " style="left:45px;top:264px;;letter-spacing:0.006px">Select the &#x27;MemoryErrors&#x27; launch configuration, and</div>
<div class="t " style="left:45px;top:279px;;letter-spacing:0.061px">select &#x27;Memory&#x27; from the launch mode selector on the</div>
<div class="t " style="left:45px;top:294px;;letter-spacing:-0.070px">launch bar.</div>
<div class="sep" style="left:37px;top:322px;width:310px"></div>
<div class="t " style="left:45px;top:334px;;letter-spacing:0.074px">Click the &#x27;Build&#x27; button on the launch bar.</div>
<div class="sep" style="left:37px;top:365px;width:310px"></div>
<div class="t " style="left:45px;top:377px;;letter-spacing:-0.056px">Repeat the above instructions for &#x27;MemoryLeaks&#x27;.</div>
<div class="t b" style="left:22px;top:455px;;letter-spacing:-0.071px">To view and navigate through the memory errors, perform</div>
<div class="t b" style="left:22px;top:470px;;letter-spacing:-0.188px">the following steps:</div>
<div class="t " style="left:45px;top:495px;;letter-spacing:-0.124px">Click the &#x27;MemoryErrors&#x27; session in the &#x27;Session View&#x27;.</div>
<div class="sep" style="left:37px;top:526px;width:310px"></div>
<div class="t " style="left:45px;top:538px;;letter-spacing:0.029px">Switch to the &#x27;Memory Problems&#x27; view.</div>
<div class="sep" style="left:37px;top:569px;width:310px"></div>
<div class="t " style="left:45px;top:581px;;letter-spacing:-0.105px">Double-click on a row in the Problems table. The IDE</div>
<div class="t " style="left:45px;top:597px;color:#333">opens the code editor and positions the cursor at</div>
</div>
<div class="a" style="left:1583px;top:127px;width:16px;height:603px;background:#f0f0f0"></div><div class="a" style="left:1583px;top:144px;width:15px;height:421px;background:#cdcdcd"></div><svg class="i" style="left:1586.5px;top:133px" width="9" height="6" viewBox="0 0 9 6"><path d="M1 5.200l3.500-3.500 3.500 3.500" stroke="#505050" stroke-width="1.900" fill="none"/></svg><svg class="i" style="left:1586.5px;top:719px" width="9" height="6" viewBox="0 0 9 6"><path d="M1 0.800l3.500 3.500 3.500-3.500" stroke="#505050" stroke-width="1.900" fill="none"/></svg>
<div class="panel" style="left:302px;top:575px;width:895px;height:156px"><div class="tabbar"></div><div class="tab" style="left:137px;width:93px"></div></div>
<svg class="i" style="left:307px;top:580px" width="16" height="16" viewBox="0 0 16 16" ><path d="M5.500 1.500h6v7.500c0 2.500-1 3.500-1 5h4.500" fill="#f1f6fd" stroke="#8aa4cc" stroke-width="1"/><path d="M5.500 1.500v6" stroke="#b59650" stroke-width="1"/><circle cx="6" cy="4" r="2.500" fill="#e0323c"/><rect x="1" y="8" width="7" height="7.500" fill="#d9303c"/><path d="M2.800 10l3.400 3.500M6.200 10l-3.400 3.500" stroke="#fff" stroke-width="1.200"/></svg>
<div class="t " style="left:326px;top:580px;;letter-spacing:-0.148px">Problems</div>
<svg class="i" style="left:387px;top:580px" width="16" height="16" viewBox="0 0 16 16" ><rect x="4.500" y="3.500" width="10" height="11" fill="#f6ecc8" stroke="#a8905a" stroke-width="1"/><rect x="7.500" y="2" width="4" height="2.500" fill="#9aa4b4"/><path d="M6.500 8h6M6.500 10.500h6M6.500 12.500h4" stroke="#7a8aa8" stroke-width=".9"/><path d="M1 9.500l2.500 3L9 6" stroke="#2f6fc0" stroke-width="1.600" fill="none"/></svg>
<div class="t " style="left:406px;top:580px;;letter-spacing:-0.800px">Tasks</div>
<svg class="i" style="left:445px;top:581px" width="16" height="16" viewBox="0 0 16 16" ><rect x="1.300" y="1.800" width="12.500" height="9.400" rx="1" fill="#fff" stroke="#2f5fb0" stroke-width="1.800"/><path d="M4 5h6.500M4 7.500h4.500" stroke="#2f5fb0" stroke-width="1.100"/><path d="M6 11.500h3.200v2h-3.200z" fill="#2f5fb0"/><rect x="3.500" y="13" width="8.200" height="1.800" fill="#2f5fb0"/></svg>
<div class="t " style="left:464px;top:580px;;letter-spacing:-0.218px">Console</div>
<svg class="i" style="left:516px;top:585px" width="10" height="10" viewBox="0 0 10 10"><path d="M0.5 0.5l9 9M9.5 0.5l-9 9" stroke="#222" stroke-width="1.1" fill="none"/></svg>
<svg class="i" style="left:537px;top:580px" width="16" height="16" viewBox="0 0 16 16" ><rect x="1.500" y="2.500" width="13" height="12" fill="#fff" stroke="#5a6a8a" stroke-width="1"/><rect x="2" y="3" width="12" height="2.500" fill="#c8d4ea"/><path d="M6 5.500v9M2 8.500h12M2 11.500h12" stroke="#9aa8c4" stroke-width=".9"/></svg>
<div class="t " style="left:556px;top:580px;;letter-spacing:-0.209px">Properties</div>
<svg class="i" style="left:797px;top:580px" width="16" height="16" viewBox="0 0 16 16" ><path d="M1.500 4l2.500-2.500 4 4 4-4 2.500 2.500-4 4 4 4-2.500 2.500-4-4-4 4-2.500-2.500 4-4z" fill="#7a7a7a" stroke="#5a5a5a" stroke-width=".6"/></svg>
<div class="a" style="left:818px;top:580px;width:1px;height:17px;background:#a0a0a0"></div>
<svg class="i" style="left:828px;top:580px" width="16" height="16" viewBox="0 0 16 16" ><path d="M5.500 1.500h5v7h3l-5.500 6-5.500-6h3z" fill="#fbe6a0" stroke="#c98f20" stroke-width="1.100" stroke-linejoin="round"/></svg>
<svg class="i" style="left:851px;top:580px" width="16" height="16" viewBox="0 0 16 16" ><path d="M5.500 14.500h5v-7h3l-5.500-6-5.500 6h3z" fill="#fbe6a0" stroke="#c98f20" stroke-width="1.100" stroke-linejoin="round"/></svg>
<div class="a" style="left:871px;top:577px;width:23px;height:22px;background:#cce4f7;border:1px solid #8cbce8"></div>
<svg class="i" style="left:874px;top:580px" width="16" height="16" viewBox="0 0 16 16" ><path d="M.700 4.400l4.300-4v2.600h7.500v2.800h-7.500v2.600z" fill="#fdeab0" stroke="#c88a1a" stroke-width="1" stroke-linejoin="round"/><path d="M15.300 11.500l-4.300-4v2.600h-7.500v2.800h7.500v2.600z" fill="#fdeab0" stroke="#c88a1a" stroke-width="1" stroke-linejoin="round"/></svg>
<div class="a" style="left:895px;top:580px;width:1px;height:17px;background:#a0a0a0"></div>
<svg class="i" style="left:905px;top:580px" width="16" height="16" viewBox="0 0 16 16" ><rect x="1.500" y="2.500" width="9" height="11" fill="#eef1f6" stroke="#b4bccc" stroke-width=".9"/><rect x="11.500" y="2.500" width="3" height="11" fill="#f4f6fa" stroke="#9aa8c4" stroke-width=".9"/><rect x="12" y="4" width="2" height="2" fill="#9aa8c4"/><rect x="12" y="10" width="2" height="2" fill="#9aa8c4"/><rect x="2" y="9.500" width="6" height="5" fill="#d4daea" stroke="#aab4cc" stroke-width=".7"/></svg>
<svg class="i" style="left:928px;top:580px" width="16" height="16" viewBox="0 0 16 16" ><rect x="3.500" y="2.500" width="7" height="8" fill="#eef1f6" stroke="#b4bccc" stroke-width=".9"/><rect x="11.500" y="2.500" width="3" height="11" fill="#f4f6fa" stroke="#7a8ab4" stroke-width=".9"/><rect x="12" y="4" width="2" height="2" fill="#7a8ab4"/><rect x="12" y="10" width="2" height="2" fill="#7a8ab4"/><path d="M3.500 10v-2a2 2 0 0 1 4 0v2" fill="none" stroke="#b98322" stroke-width="1.200"/><rect x="1.500" y="9.500" width="8" height="5.500" rx=".8" fill="#f4c860" stroke="#a8761a" stroke-width=".9"/><rect x="5" y="11.500" width="1.200" height="2" fill="#6a4a10"/></svg>
<svg class="i" style="left:951px;top:580px" width="16" height="16" viewBox="0 0 16 16" ><path d="M6 5h8M7 8h6" stroke="#c8c8c8" stroke-width="1.200"/></svg>
<svg class="i" style="left:974px;top:580px" width="16" height="16" viewBox="0 0 16 16" ><path d="M2.500 1.500h6l2.500 2.500v9.500h-8.500z" fill="#fbfbf7" stroke="#b4a878" stroke-width=".9"/><path d="M4 5h5M4 7h5M4 9h5M4 11h3" stroke="#8a94a8" stroke-width=".8"/><path d="M9.500 10l5 5M14.500 10l-5 5" stroke="#8a8a8a" stroke-width="1.800"/></svg>
<div class="a" style="left:994px;top:577px;width:23px;height:22px;background:#cce4f7;border:1px solid #8cbce8"></div>
<svg class="i" style="left:997px;top:580px" width="16" height="16" viewBox="0 0 16 16" ><rect x="5.500" y="1.500" width="9.500" height="7.500" rx="1" fill="#fff" stroke="#5a8fd0" stroke-width="1.200"/><path d="M7.500 4h5.500M7.500 6.500h4" stroke="#5a8fd0" stroke-width=".9"/><rect x="1.500" y="6.500" width="7" height="5.500" rx=".8" fill="#e9f1fb" stroke="#3f6ab4" stroke-width="1.200"/><path d="M4 12.500h2v1.500h-2z" fill="#3f6ab4"/><rect x="2.500" y="13.800" width="5" height="1.400" fill="#3f6ab4"/></svg>
<div class="a" style="left:1018px;top:580px;width:1px;height:17px;background:#a0a0a0"></div>
<svg class="i" style="left:1028px;top:580px" width="16" height="16" viewBox="0 0 16 16" ><rect x="1.500" y="4.500" width="11" height="10" fill="#f7fbff" stroke="#4a7fc0" stroke-width="1"/><rect x="1" y="4" width="12" height="2.200" fill="#5a94d6"/><path d="M3 13l5-3" stroke="#e4d7a0" stroke-width="1.200"/><path d="M8 9.500l3-3" stroke="#4a6a50" stroke-width="1.200"/><path d="M10 2.500l2.500-1.800 3 3-1.800 2.500-1.700.5-2.500-2.500z" fill="#4ea85a" stroke="#2c7a3a" stroke-width=".7"/></svg>
<svg class="i" style="left:1052px;top:580px" width="16" height="16" viewBox="0 0 16 16" ><rect x="1.300" y="1.800" width="12.500" height="9.400" rx="1" fill="#fff" stroke="#2f5fb0" stroke-width="1.800"/><path d="M4 5h6.500M4 7.500h4.500" stroke="#2f5fb0" stroke-width="1.100"/><path d="M6 11.500h3.200v2h-3.200z" fill="#2f5fb0"/><rect x="3.500" y="13" width="8.200" height="1.800" fill="#2f5fb0"/></svg>
<svg class="i" style="left:1075px;top:587px" width="7" height="4" viewBox="0 0 7 4"><path d="M0 0h7l-3.500 4z" fill="#1a1a1a"/></svg>
<svg class="i" style="left:1089px;top:580px" width="16" height="16" viewBox="0 0 16 16" ><rect x="2.500" y="3.500" width="11" height="10" fill="#fdf6dc" stroke="#b4903c" stroke-width="1"/><rect x="2" y="3" width="12" height="2.500" fill="#4a86d0"/><path d="M8 13l5-5" stroke="#f4e2a8" stroke-width="2"/><path d="M12 0l1 2.500 2.500 1-2.500 1-1 2.500-1-2.500-2.500-1 2.500-1z" fill="#fff3c0" stroke="#d9a21c" stroke-width=".9"/></svg>
<svg class="i" style="left:1113px;top:587px" width="7" height="4" viewBox="0 0 7 4"><path d="M0 0h7l-3.500 4z" fill="#1a1a1a"/></svg>
<svg class="i" style="left:1127px;top:580px" width="16" height="16" viewBox="0 0 16 16" ><rect x="1.300" y="1.800" width="12.500" height="9.400" rx="1" fill="#fff" stroke="#2f5fb0" stroke-width="1.800"/><path d="M4 5h6.500M4 7.500h4.500" stroke="#2f5fb0" stroke-width="1.100"/><path d="M6 11.500h3.200v2h-3.200z" fill="#2f5fb0"/><rect x="3.500" y="13" width="8.200" height="1.800" fill="#2f5fb0"/></svg>
<svg class="i" style="left:1154px;top:583px" width="12" height="12" viewBox="0 0 12 12"><rect x="0.5" y="0.5" width="9" height="3" fill="#fff" stroke="#000"/></svg><svg class="i" style="left:1177px;top:583px" width="12" height="12" viewBox="0 0 12 12"><rect x="0.5" y="0.5" width="9" height="9" fill="#fff" stroke="#000"/><path d="M0.5 2.5h9" stroke="#000"/></svg>
<div class="a" style="left:303px;top:601px;width:893px;height:15px;background:#f4f4f4"></div>
<div class="t " style="left:304px;top:600px;;letter-spacing:-0.206px">CDT Build Console [MemoryLeaks]</div>
<div class="a" style="left:303px;top:616px;width:893px;height:1px;background:#8e8e8e"></div><div class="a" style="left:303px;top:617px;width:893px;height:1px;background:#e6e6e6"></div>
<div class="a" style="left:305px;top:624px;width:874px;height:15px;background:#fee4e0"></div>
<div class="a mono" style="left:305px;top:625px;width:874px;height:90px;overflow:hidden">
<div class="a" style="left:0;top:0px;height:15px;line-height:15px;transform:scaleY(1.08);transform-origin:0 3px">Error: Program "make" not found in PATH</div>
<div class="a" style="left:0;top:15px;height:15px;line-height:15px;transform:scaleY(1.08);transform-origin:0 3px">PATH=[/usr/bin;/bin;/usr/sbin;/sbin;/common/bin;;C:/QNX/qnxmomenticside//features/com.qnx.tools.jre.win32.x86_64_17.0.8/jdk-17.0.8+7-jre/bin</div>
<div class="a" style="left:0;top:30px;height:15px;line-height:15px;transform:scaleY(1.08);transform-origin:0 3px"></div>
<div class="a" style="left:0;top:45px;height:15px;line-height:15px;transform:scaleY(1.08);transform-origin:0 3px"><span style="color:#1414ff">01:55:18 Build Failed. 1 errors, 0 warnings. (took 659ms)</span></div>
</div>
<div class="a" style="left:1180px;top:618px;width:16px;height:97px;background:#f0f0f0"></div><div class="a" style="left:1180px;top:657px;width:15px;height:40px;background:#cdcdcd"></div><svg class="i" style="left:1183.5px;top:624px" width="9" height="6" viewBox="0 0 9 6"><path d="M1 5.200l3.500-3.500 3.500 3.500" stroke="#505050" stroke-width="1.900" fill="none"/></svg><svg class="i" style="left:1183.5px;top:703px" width="9" height="6" viewBox="0 0 9 6"><path d="M1 0.800l3.500 3.500 3.500-3.500" stroke="#505050" stroke-width="1.900" fill="none"/></svg>
<div class="a" style="left:303px;top:715px;width:893px;height:15px;background:#f0f0f0"></div>
<div class="a" style="left:320px;top:715px;width:76px;height:14px;background:#cdcdcd"></div>
<svg class="i" style="left:308px;top:718.5px" width="6" height="9" viewBox="0 0 6 9"><path d="M5.200 1l-3.500 3.500 3.500 3.500" stroke="#505050" stroke-width="1.900" fill="none"/></svg>
<svg class="i" style="left:1168px;top:718.5px" width="6" height="9" viewBox="0 0 6 9"><path d="M0.800 1l3.500 3.500-3.500 3.500" stroke="#505050" stroke-width="1.900" fill="none"/></svg>
<div class="a" style="left:2px;top:736px;width:2px;height:18px;background:repeating-linear-gradient(#b9b2a3 0 2px,transparent 2px 4px)"></div>
<div class="a" style="left:5px;top:733px;width:129px;height:21px;background:#f0f0f0;border:1px solid #e0e0e0"></div>
<div class="a" style="left:5px;top:733px;width:83px;height:21px;background:#a0a0a0"></div>
<div class="t " style="left:34px;top:735px;;letter-spacing:-0.143px">163M of 256M</div>
<div class="a" style="left:134px;top:733px;width:17px;height:21px;background:#fafafa;border-left:1px solid #999"></div>
<svg class="i" style="left:136px;top:735px" width="16" height="16" viewBox="0 0 16 16" ><path d="M3.500 5.500h9l-.8 9.500h-7.400z" fill="#dfe9f8" stroke="#3f62a8" stroke-width="1"/><path d="M2 4.500h12" stroke="#3f62a8" stroke-width="1.400"/><path d="M6 3.500v-1.500h4v1.500" fill="none" stroke="#3f62a8" stroke-width="1"/><path d="M6 7v6.500M8 7v6.500M10 7v6.500" stroke="#5a7fc4" stroke-width=".9"/></svg>
<svg class="i" style="left:155px;top:735px" width="16" height="16" viewBox="0 0 16 16" ><circle cx="8.500" cy="8.500" r="3.100" fill="#6db878" stroke="#2f7f3f" stroke-width="1"/></svg>
<div class="t " style="left:176px;top:734px;;letter-spacing:-0.091px">/EngPedia/src/EngPedia.cpp - [EngPedia]</div>
<div class="a" style="left:1315px;top:737px;width:2px;height:14px;background:repeating-linear-gradient(#b9b2a3 0 2px,transparent 2px 4px)"></div>
</body></html>
